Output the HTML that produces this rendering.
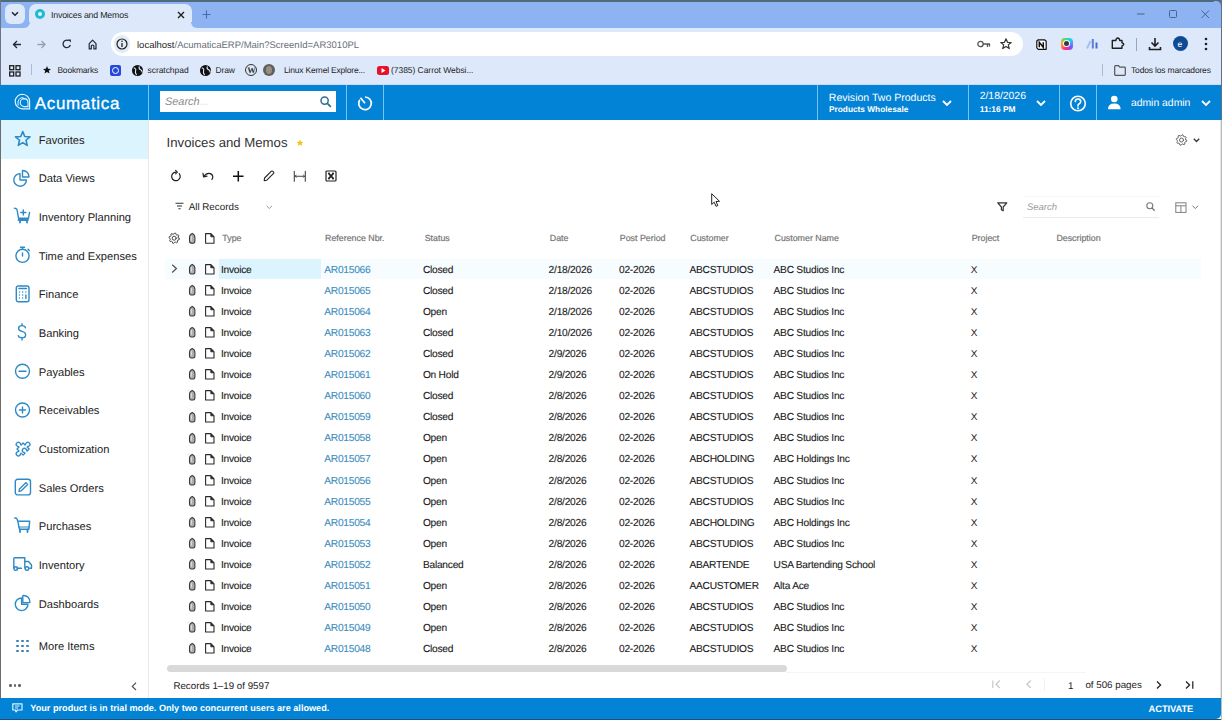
<!DOCTYPE html>
<html><head><meta charset="utf-8">
<style>
*{box-sizing:border-box;margin:0;padding:0}
html,body{width:1222px;height:720px;overflow:hidden;background:#fff;font-family:"Liberation Sans",sans-serif;color:#222}
.a{position:absolute;white-space:nowrap;text-rendering:geometricPrecision}
svg{position:absolute;overflow:visible}
</style></head><body>
<div style="position:absolute;left:0px;top:0px;width:1222px;height:28px;background:#8db3f2;"></div>
<div style="position:absolute;left:0px;top:0px;width:1222px;height:2px;background:#4f6b7c;"></div>
<div style="position:absolute;left:5px;top:4px;width:20px;height:20px;background:#dde9fb;border-radius:6px"></div>
<svg style="left:11px;top:11px;" width="8" height="6" viewBox="0 0 8 6"><path d="M1 1.2 L4 4.2 L7 1.2" fill="none" stroke="#222" stroke-width="1.5"/></svg>
<div style="position:absolute;left:29px;top:4px;width:163px;height:24px;background:#dde9fb;border-radius:7px 7px 0 0"></div>
<div style="position:absolute;left:24px;top:22px;width:6px;height:6px;background:#dde9fb;"></div>
<div style="position:absolute;left:24px;top:22px;width:6px;height:6px;background:#8db3f2;border-radius:0 0 6px 0"></div>
<div style="position:absolute;left:191px;top:22px;width:6px;height:6px;background:#dde9fb;"></div>
<div style="position:absolute;left:191px;top:22px;width:6px;height:6px;background:#8db3f2;border-radius:0 0 0 6px"></div>
<div style="position:absolute;left:35px;top:9px;width:10px;height:10px;background:#22b9d3;border-radius:50%"></div>
<div style="position:absolute;left:37.6px;top:11.6px;width:4.8px;height:4.8px;background:#dcfbff;border-radius:50%"></div>
<div class="a" style="left:51px;top:11.45px;font-size:8.8px;line-height:8.8px;color:#1f1f1f;font-weight:normal;font-style:normal;letter-spacing:-0.2px">Invoices and Memos</div>
<svg style="left:177px;top:11px;" width="8" height="8" viewBox="0 0 8 8"><path d="M1 1 L7 7 M7 1 L1 7" stroke="#1f1f1f" stroke-width="1.4"/></svg>
<svg style="left:202px;top:10px;" width="9" height="9" viewBox="0 0 9 9"><path d="M4.5 0.5 V8.5 M0.5 4.5 H8.5" stroke="#4a6aa8" stroke-width="1.1"/></svg>
<svg style="left:1137px;top:13px;" width="8" height="2" viewBox="0 0 8 2"><path d="M0 1 H7.5" stroke="#4a6290" stroke-width="1"/></svg>
<svg style="left:1169px;top:10px;" width="8" height="8" viewBox="0 0 8 8"><rect x="0.5" y="0.5" width="7" height="7" rx="1" fill="none" stroke="#4a6290" stroke-width="1"/></svg>
<svg style="left:1201px;top:10px;" width="9" height="9" viewBox="0 0 9 9"><path d="M0.5 0.5 L8 8 M8 0.5 L0.5 8" stroke="#4a6290" stroke-width="1"/></svg>
<div style="position:absolute;left:1216px;top:1px;width:6px;height:6px;background:#8db3f2;"></div>
<div style="position:absolute;left:1216px;top:1px;width:6px;height:6px;background:#5f7088;border-radius:0 0 0 0"></div>
<div style="position:absolute;left:1214px;top:1px;width:7px;height:7px;background:#8db3f2;border-radius:0 5px 0 0"></div>
<div style="position:absolute;left:0px;top:28px;width:1222px;height:32px;background:#dde9fb;"></div>
<svg style="left:11.5px;top:39.5px;" width="10" height="10" viewBox="0 0 10 10"><path d="M9 4.5 H1.5 M5 1 L1.5 4.5 L5 8" fill="none" stroke="#1f2a3a" stroke-width="1.4" stroke-linejoin="round"/></svg>
<svg style="left:36.5px;top:39.5px;" width="10" height="10" viewBox="0 0 10 10"><path d="M0.5 4.5 H8 M4.5 1 L8 4.5 L4.5 8" fill="none" stroke="#94a0b4" stroke-width="1.3" stroke-linejoin="round"/></svg>
<svg style="left:62px;top:39px;" width="10" height="10" viewBox="0 0 10 10"><path d="M8.37 6.08 A3.75 3.75 0 1 1 6.7 1.6" fill="none" stroke="#1f2a3a" stroke-width="1.3"/><path d="M5.9 0.5 L8.9 0.5 L8.9 3.5 Z" fill="#1f2a3a"/></svg>
<svg style="left:87.5px;top:38.8px;" width="10" height="11" viewBox="0 0 10 11"><path d="M1.2 9.9 V4.6 L4.6 1.2 L8 4.6 V9.9 H5.9 V7 Q5.9 6 4.6 6 Q3.3 6 3.3 7 V9.9 Z" fill="none" stroke="#1f2a3a" stroke-width="1.2" stroke-linejoin="round"/></svg>
<div style="position:absolute;left:111px;top:32px;width:912px;height:24px;background:#fff;border-radius:12px"></div>
<div style="position:absolute;left:114px;top:35px;width:16px;height:18px;background:#e3ebf7;border-radius:9px"></div>
<svg style="left:116px;top:38px;" width="12" height="12" viewBox="0 0 12 12"><circle cx="6" cy="6" r="5" fill="none" stroke="#1f1f1f" stroke-width="1.2"/><path d="M6 5 V9" stroke="#1f1f1f" stroke-width="1.3"/><circle cx="6" cy="3.3" r="0.8" fill="#1f1f1f"/></svg>
<div class="a" style="left:137px;top:40.56px;font-size:9.5px;line-height:9.5px;color:#1f1f1f;font-weight:normal;font-style:normal;">localhost<span style="color:#6a6f78">/AcumaticaERP/Main?ScreenId=AR3010PL</span></div>
<svg style="left:977px;top:40px;" width="14" height="8" viewBox="0 0 14 8"><circle cx="3.5" cy="4" r="2.7" fill="none" stroke="#555" stroke-width="1.3"/><path d="M6 4 H13 M10.5 4 V7 M12.5 4 V6.5" stroke="#555" stroke-width="1.3"/></svg>
<svg style="left:1000px;top:38px;" width="12" height="12" viewBox="0 0 12 12"><path d="M6 0.8 L7.5 4.3 L11.2 4.5 L8.3 6.9 L9.3 10.6 L6 8.5 L2.7 10.6 L3.7 6.9 L0.8 4.5 L4.5 4.3 Z" fill="none" stroke="#333" stroke-width="1.2" stroke-linejoin="round"/></svg>
<svg style="left:1036px;top:38.5px;" width="11" height="11" viewBox="0 0 11 11"><path d="M2 0.8 H8.5 L10.2 2.3 V10.3 H2.3 L0.8 8.8 V2 Z" fill="#fff" stroke="#111" stroke-width="1.2" stroke-linejoin="round"/><path d="M3.3 8.3 V3.3 L7.3 8.3 V3.3" fill="none" stroke="#111" stroke-width="1.5"/></svg>
<div style="position:absolute;left:1060.5px;top:37.8px;width:12px;height:12px;background:conic-gradient(from 200deg,#ff2d7a,#ffb020,#42e06a,#20c8ff,#8a4dff,#ff2d7a);border-radius:4px"></div>
<div style="position:absolute;left:1062.8px;top:40.1px;width:7.4px;height:7.4px;background:#fff;border-radius:50%"></div>
<div style="position:absolute;left:1063.8px;top:41.1px;width:5.4px;height:5.4px;background:#333a45;border-radius:50%"></div>
<svg style="left:1086px;top:38px;" width="13" height="11" viewBox="0 0 13 11"><path d="M1 10.5 L4.5 3" stroke="#a9bdf0" stroke-width="2"/><path d="M6.8 10.5 V1" stroke="#5b7fd8" stroke-width="2"/><path d="M10.5 10.5 V4.5" stroke="#4a6cc8" stroke-width="2"/></svg>
<svg style="left:1111px;top:37px;" width="14" height="13" viewBox="0 0 14 13"><path d="M1.3 3.5 H4.8 Q5.3 1 6.8 1 Q8.3 1 8.8 3.5 H11 V5.8 Q12.8 6.3 12.8 7.3 Q12.8 8.3 11 8.8 V11.3 H1.3 Z" fill="none" stroke="#1f1f1f" stroke-width="1.4" stroke-linejoin="round"/></svg>
<div style="position:absolute;left:1136px;top:38px;width:1px;height:13px;background:#9aa6b8;"></div>
<svg style="left:1148px;top:37px;" width="14" height="14" viewBox="0 0 14 14"><path d="M7 1 V9 M3.5 5.5 L7 9 L10.5 5.5 M1.5 10 V12.5 H12.5 V10" fill="none" stroke="#1f1f1f" stroke-width="1.6"/></svg>
<div style="position:absolute;left:1173px;top:36px;width:15px;height:15px;background:#0e4b94;border-radius:50%"></div>
<div class="a" style="left:1177.5px;top:39.80px;font-size:8.5px;line-height:8.5px;color:#fff;font-weight:normal;font-style:normal;">e</div>
<svg style="left:1204px;top:37px;" width="4" height="14" viewBox="0 0 4 14"><circle cx="2" cy="2" r="1.3" fill="#1f1f1f"/><circle cx="2" cy="7" r="1.3" fill="#1f1f1f"/><circle cx="2" cy="12" r="1.3" fill="#1f1f1f"/></svg>
<div style="position:absolute;left:0px;top:60px;width:1222px;height:25px;background:#dde9fb;"></div>
<svg style="left:9px;top:65px;" width="12" height="12" viewBox="0 0 12 12"><rect x="0.7" y="0.7" width="4" height="4" fill="none" stroke="#1f1f1f" stroke-width="1.3"/><rect x="0.7" y="7" width="4" height="4" fill="none" stroke="#1f1f1f" stroke-width="1.3"/><rect x="7" y="0.7" width="4" height="4" fill="none" stroke="#1f1f1f" stroke-width="1.3"/><rect x="7" y="7" width="4" height="4" fill="none" stroke="#1f1f1f" stroke-width="1.3"/></svg>
<div style="position:absolute;left:31px;top:64px;width:1px;height:11px;background:#a9b9d6;"></div>
<svg style="left:43px;top:66px;" width="8" height="8" viewBox="0 0 8 8"><path d="M4 0 L5.1 2.7 L8 2.9 L5.8 4.7 L6.5 7.6 L4 6 L1.5 7.6 L2.2 4.7 L0 2.9 L2.9 2.7 Z" fill="#111"/></svg>
<div class="a" style="left:57.4px;top:66.10px;font-size:8.5px;line-height:8.5px;color:#1f1f1f;font-weight:normal;font-style:normal;letter-spacing:-0.2px">Bookmarks</div>
<div style="position:absolute;left:110px;top:65px;width:11px;height:11px;background:#2447dc;border-radius:2px"></div>
<div style="position:absolute;left:112px;top:67px;width:7px;height:7px;background:transparent;border-radius:50%;border:1.2px solid #fff"></div>
<div style="position:absolute;left:132px;top:65px;width:11px;height:11px;background:#111;border-radius:50%"></div>
<svg style="left:132px;top:65px;" width="11" height="11" viewBox="0 0 11 11"><path d="M1.8 2.8 Q4.5 3.8 3.6 5.6 Q2.8 7.4 4.6 10 M7.4 1.4 Q6.5 3.7 8.3 4.6 Q10.2 5.5 10.2 7.4" fill="none" stroke="#dde9fb" stroke-width="1.1"/></svg>
<div class="a" style="left:147.5px;top:66.10px;font-size:8.5px;line-height:8.5px;color:#1f1f1f;font-weight:normal;font-style:normal;letter-spacing:-0.05px">scratchpad</div>
<div style="position:absolute;left:200px;top:65px;width:11px;height:11px;background:#111;border-radius:50%"></div>
<svg style="left:200px;top:65px;" width="11" height="11" viewBox="0 0 11 11"><path d="M1.8 2.8 Q4.5 3.8 3.6 5.6 Q2.8 7.4 4.6 10 M7.4 1.4 Q6.5 3.7 8.3 4.6 Q10.2 5.5 10.2 7.4" fill="none" stroke="#dde9fb" stroke-width="1.1"/></svg>
<div class="a" style="left:215.5px;top:66.10px;font-size:8.5px;line-height:8.5px;color:#1f1f1f;font-weight:normal;font-style:normal;letter-spacing:-0.15px">Draw</div>
<div style="position:absolute;left:245px;top:64px;width:12px;height:12px;background:transparent;border-radius:50%;border:1.4px solid #333"></div>
<div class="a" style="left:247.2px;top:66.02px;font-size:8.6px;line-height:8.6px;color:#333;font-weight:bold;font-style:normal;font-family:'Liberation Serif',serif">W</div>
<div style="position:absolute;left:263px;top:64px;width:12px;height:12px;background:#5d605c;border-radius:50%"></div>
<div style="position:absolute;left:266px;top:66px;width:6px;height:8px;background:#9a8e82;border-radius:50%"></div>
<div class="a" style="left:284px;top:66.10px;font-size:8.5px;line-height:8.5px;color:#1f1f1f;font-weight:normal;font-style:normal;letter-spacing:-0.2px">Linux Kernel Explore...</div>
<div style="position:absolute;left:377px;top:66px;width:12px;height:9px;background:#e8102a;border-radius:2.5px"></div>
<svg style="left:381px;top:68px;" width="5" height="5" viewBox="0 0 5 5"><path d="M0.5 0 L4.5 2.5 L0.5 5 Z" fill="#fff"/></svg>
<div class="a" style="left:391px;top:66.10px;font-size:8.5px;line-height:8.5px;color:#1f1f1f;font-weight:normal;font-style:normal;letter-spacing:-0.05px">(7385) Carrot Websi...</div>
<div style="position:absolute;left:1102px;top:64px;width:1px;height:12px;background:#a9b9d6;"></div>
<svg style="left:1114px;top:65px;" width="12" height="11" viewBox="0 0 12 11"><path d="M0.7 1.5 Q0.7 0.7 1.5 0.7 H4.5 L5.8 2.2 H10.5 Q11.3 2.2 11.3 3 V9.5 Q11.3 10.3 10.5 10.3 H1.5 Q0.7 10.3 0.7 9.5 Z" fill="none" stroke="#555" stroke-width="1.2"/></svg>
<div class="a" style="left:1131px;top:66.10px;font-size:8.5px;line-height:8.5px;color:#1f1f1f;font-weight:normal;font-style:normal;letter-spacing:-0.17px">Todos los marcadores</div>
<div style="position:absolute;left:0px;top:84px;width:1222px;height:1px;background:#c8dcf5;"></div>
<div style="position:absolute;left:0px;top:0px;width:1px;height:85px;background:#6d7580;"></div>
<div style="position:absolute;left:0px;top:85px;width:1222px;height:35px;background:#0383d6;"></div>
<svg style="left:14px;top:93px;" width="18" height="18" viewBox="0 0 18 18"><path d="M8.5 1.2 A7.3 7.3 0 1 0 8.5 15.8 H15.6 V8.5 A7.3 7.3 0 0 0 8.5 1.2 Z" fill="none" stroke="#e6f7ff" stroke-width="1.15"/><path d="M10.2 5.6 A4 4 0 1 0 10.2 13.6 H14 V9.6 A4 4 0 0 0 10.2 5.6 Z" fill="none" stroke="#e6f7ff" stroke-width="1.1"/><path d="M4.2 12.5 Q3.2 7.5 6.3 5.2 Q8.6 3.8 10.6 5.6" fill="none" stroke="#e6f7ff" stroke-width="1"/></svg>
<div class="a" style="left:34.8px;top:94.61px;font-size:17px;line-height:17px;color:#fff;font-weight:normal;font-style:normal;letter-spacing:0.65px;-webkit-text-stroke:0.3px #fff">Acumatica</div>
<div style="position:absolute;left:148px;top:85px;width:1px;height:35px;background:#72c4f6;"></div>
<div style="position:absolute;left:160px;top:91px;width:176px;height:21px;background:#fff;"></div>
<div class="a" style="left:165px;top:96.97px;font-size:10.9px;line-height:10.9px;color:#8a8a8a;font-weight:normal;font-style:italic;">Search<span style="color:#dcdcdc">...</span></div>
<svg style="left:320px;top:96px;" width="12" height="12" viewBox="0 0 12 12"><circle cx="4.6" cy="4.6" r="3.6" fill="none" stroke="#2f6c96" stroke-width="1.5"/><path d="M7.3 7.3 L10.8 10.8" stroke="#2f6c96" stroke-width="1.8"/></svg>
<div style="position:absolute;left:346px;top:85px;width:1px;height:35px;background:#72c4f6;"></div>
<svg style="left:357px;top:95px;" width="16" height="16" viewBox="0 0 16 16"><path d="M8 2 A6.3 6.3 0 1 1 2.8 4.7" fill="none" stroke="#fff" stroke-width="1.7"/><path d="M3.5 2.8 L8 8.2" stroke="#fff" stroke-width="1.7"/></svg>
<div style="position:absolute;left:383px;top:85px;width:1px;height:35px;background:#72c4f6;"></div>
<div style="position:absolute;left:817px;top:85px;width:1px;height:35px;background:#72c4f6;"></div>
<div class="a" style="left:828.8px;top:93.08px;font-size:10.54px;line-height:10.54px;color:#fff;font-weight:normal;font-style:normal;">Revision Two Products</div>
<div class="a" style="left:829px;top:104.77px;font-size:8.3px;line-height:8.3px;color:#fff;font-weight:bold;font-style:normal;">Products Wholesale</div>
<svg style="left:942px;top:100px;" width="10" height="7" viewBox="0 0 10 7"><path d="M1 1 L5 5 L9 1" fill="none" stroke="#fff" stroke-width="1.8"/></svg>
<div style="position:absolute;left:968px;top:85px;width:1px;height:35px;background:#72c4f6;"></div>
<div class="a" style="left:979.7px;top:92.40px;font-size:10.4px;line-height:10.4px;color:#fff;font-weight:normal;font-style:normal;">2/18/2026</div>
<div class="a" style="left:979.7px;top:104.79px;font-size:8.4px;line-height:8.4px;color:#fff;font-weight:bold;font-style:normal;">11:16 PM</div>
<svg style="left:1036px;top:100px;" width="10" height="7" viewBox="0 0 10 7"><path d="M1 1 L5 5 L9 1" fill="none" stroke="#fff" stroke-width="1.8"/></svg>
<div style="position:absolute;left:1059px;top:85px;width:1px;height:35px;background:#72c4f6;"></div>
<svg style="left:1069px;top:95px;" width="18" height="18" viewBox="0 0 18 18"><circle cx="9" cy="8.5" r="7.3" fill="none" stroke="#fff" stroke-width="1.6"/></svg>
<svg style="left:1069px;top:95px;" width="18" height="18" viewBox="0 0 18 18"><path d="M6.3 6.6 Q6.3 4 9 4 Q11.7 4 11.7 6.5 Q11.7 8 10.2 8.8 Q9 9.4 9 10.6 V11" fill="none" stroke="#fff" stroke-width="1.6" stroke-linecap="round"/><circle cx="9" cy="13.2" r="1" fill="#fff"/></svg>
<div style="position:absolute;left:1096px;top:85px;width:1px;height:35px;background:#72c4f6;"></div>
<svg style="left:1107px;top:95px;" width="15" height="15" viewBox="0 0 15 15"><circle cx="7.3" cy="4" r="3.3" fill="#fff"/><path d="M1 14.3 Q1 8.6 7.3 8.6 Q13.6 8.6 13.6 14.3 Z" fill="#fff"/></svg>
<div class="a" style="left:1130.9px;top:98.50px;font-size:10.4px;line-height:10.4px;color:#fff;font-weight:normal;font-style:normal;">admin admin</div>
<svg style="left:1201px;top:100px;" width="10" height="7" viewBox="0 0 10 7"><path d="M1 1 L5 5 L9 1" fill="none" stroke="#fff" stroke-width="1.8"/></svg>
<div style="position:absolute;left:0px;top:120px;width:149px;height:578px;background:#fff;"></div>
<div style="position:absolute;left:148px;top:120px;width:1px;height:578px;background:#e8e8e8;"></div>
<div style="position:absolute;left:1px;top:120px;width:147px;height:38.5px;background:#dcf4fd;"></div>
<div style="position:absolute;left:0px;top:120px;width:1px;height:578px;background:#6d6d6d;"></div>
<div class="a" style="left:38.75px;top:135.56px;font-size:11.15px;line-height:11.15px;color:#222;font-weight:normal;font-style:normal;">Favorites</div>
<div class="a" style="left:38.75px;top:174.24px;font-size:11.15px;line-height:11.15px;color:#222;font-weight:normal;font-style:normal;">Data Views</div>
<div class="a" style="left:38.75px;top:212.92px;font-size:11.15px;line-height:11.15px;color:#222;font-weight:normal;font-style:normal;">Inventory Planning</div>
<div class="a" style="left:38.75px;top:251.60px;font-size:11.15px;line-height:11.15px;color:#222;font-weight:normal;font-style:normal;">Time and Expenses</div>
<div class="a" style="left:38.75px;top:290.28px;font-size:11.15px;line-height:11.15px;color:#222;font-weight:normal;font-style:normal;">Finance</div>
<div class="a" style="left:38.75px;top:328.96px;font-size:11.15px;line-height:11.15px;color:#222;font-weight:normal;font-style:normal;">Banking</div>
<div class="a" style="left:38.75px;top:367.64px;font-size:11.15px;line-height:11.15px;color:#222;font-weight:normal;font-style:normal;">Payables</div>
<div class="a" style="left:38.75px;top:406.32px;font-size:11.15px;line-height:11.15px;color:#222;font-weight:normal;font-style:normal;">Receivables</div>
<div class="a" style="left:38.75px;top:445.00px;font-size:11.15px;line-height:11.15px;color:#222;font-weight:normal;font-style:normal;">Customization</div>
<div class="a" style="left:38.75px;top:483.68px;font-size:11.15px;line-height:11.15px;color:#222;font-weight:normal;font-style:normal;">Sales Orders</div>
<div class="a" style="left:38.75px;top:522.36px;font-size:11.15px;line-height:11.15px;color:#222;font-weight:normal;font-style:normal;">Purchases</div>
<div class="a" style="left:38.75px;top:561.04px;font-size:11.15px;line-height:11.15px;color:#222;font-weight:normal;font-style:normal;">Inventory</div>
<div class="a" style="left:38.75px;top:599.72px;font-size:11.15px;line-height:11.15px;color:#222;font-weight:normal;font-style:normal;">Dashboards</div>
<div class="a" style="left:38.75px;top:642.36px;font-size:11.15px;line-height:11.15px;color:#222;font-weight:normal;font-style:normal;">More Items</div>
<svg style="left:15px;top:131px;" width="16" height="16" viewBox="0 0 16 16"><polygon points="7.75,0.60 9.75,5.45 14.98,5.85 10.98,9.25 12.22,14.35 7.75,11.60 3.28,14.35 4.52,9.25 0.52,5.85 5.75,5.45" fill="none" stroke="#2d8ac6" stroke-width="1.6" stroke-linejoin="round" stroke-linecap="round"/></svg>
<svg style="left:13px;top:169px;" width="18" height="18" viewBox="0 0 18 18"><path d="M7 4.6 A6.3 6.3 0 1 0 13.4 11 H7 Z" fill="none" stroke="#2d8ac6" stroke-width="1.4" stroke-linejoin="round" stroke-linecap="round"/><path d="M9.5 1.5 A6.3 6.3 0 0 1 16 8 H9.5 Z" fill="none" stroke="#2d8ac6" stroke-width="1.4" stroke-linejoin="round" stroke-linecap="round"/></svg>
<svg style="left:13px;top:207px;" width="18" height="18" viewBox="0 0 18 18"><path d="M1.5 1.2 Q3.5 1.2 4 2.5 L5.5 11.2 H15.5 L16.5 5.5" fill="none" stroke="#2d8ac6" stroke-width="1.4" stroke-linejoin="round" stroke-linecap="round"/><path d="M7 15.5 V12 M14 15.5 V12 M5.5 13 H15" fill="none" stroke="#2d8ac6" stroke-width="1.8" stroke-linejoin="round" stroke-linecap="round"/><path d="M10.3 3 V8 M7.8 5.5 H12.8" fill="none" stroke="#2d8ac6" stroke-width="1.4" stroke-linejoin="round" stroke-linecap="round"/></svg>
<svg style="left:14px;top:246px;" width="18" height="18" viewBox="0 0 18 18"><circle cx="8.5" cy="9.8" r="6.6" fill="none" stroke="#2d8ac6" stroke-width="1.4" stroke-linejoin="round" stroke-linecap="round"/><path d="M6.5 1.2 H10.5 M8.5 1.2 V3.2 M14 3.2 L15.3 4.6 M8.5 7 V10" fill="none" stroke="#2d8ac6" stroke-width="1.4" stroke-linejoin="round" stroke-linecap="round"/></svg>
<svg style="left:15px;top:285px;" width="16" height="18" viewBox="0 0 16 18"><rect x="1.3" y="1" width="12.7" height="15.8" rx="2" fill="none" stroke="#2d8ac6" stroke-width="1.4" stroke-linejoin="round" stroke-linecap="round"/><path d="M4 3.6 H11.5" fill="none" stroke="#2d8ac6" stroke-width="1.5" stroke-linejoin="round" stroke-linecap="round"/><path d="M4.5 7 v0 M7.7 7 v0 M10.9 7 v0 M4.5 10 v0 M7.7 10 v0 M10.9 10 v0 M4.5 13 v0 M7.7 13 v0 M10.9 10 V13.5" fill="none" stroke="#2d8ac6" stroke-width="1.4" stroke-linejoin="round" stroke-linecap="round"/></svg>
<svg style="left:16px;top:323px;" width="12" height="18" viewBox="0 0 12 18"><path d="M9.5 4.8 Q9 2.6 6 2.6 Q2.6 2.6 2.6 5.2 Q2.6 7.6 6 8.4 Q9.6 9.3 9.6 12 Q9.6 14.8 6 14.8 Q2.8 14.8 2.3 12.6 M6 0.8 V2.6 M6 14.8 V17" fill="none" stroke="#2d8ac6" stroke-width="1.4" stroke-linejoin="round" stroke-linecap="round"/></svg>
<svg style="left:14px;top:363px;" width="18" height="18" viewBox="0 0 18 18"><circle cx="8.5" cy="8.25" r="7" fill="none" stroke="#2d8ac6" stroke-width="1.4" stroke-linejoin="round" stroke-linecap="round"/><path d="M5 8.25 H12" fill="none" stroke="#2d8ac6" stroke-width="1.4" stroke-linejoin="round" stroke-linecap="round"/></svg>
<svg style="left:14px;top:402px;" width="18" height="18" viewBox="0 0 18 18"><circle cx="8.5" cy="8" r="7" fill="none" stroke="#2d8ac6" stroke-width="1.4" stroke-linejoin="round" stroke-linecap="round"/><path d="M5.5 8 H11.5 M8.5 5 V11" fill="none" stroke="#2d8ac6" stroke-width="1.4" stroke-linejoin="round" stroke-linecap="round"/></svg>
<svg style="left:12.5px;top:438.5px;" width="22" height="22" viewBox="0 0 22 22"><g transform="scale(0.86) rotate(-45 11 11)"><path d="M6 7 H9.3 C9.3 5.5 8.5 5.2 8.5 4.3 A2.5 2.5 0 0 1 13.5 4.3 C13.5 5.2 12.7 5.5 12.7 7 H16 V10.3 C17.5 10.3 17.8 9.5 18.7 9.5 A2.5 2.5 0 0 1 18.7 14.5 C17.8 14.5 17.5 13.7 16 13.7 V17 H12.7 C12.7 15.5 13.5 15.2 13.5 14.3 A2.5 2.5 0 0 0 8.5 14.3 C8.5 15.2 9.3 15.5 9.3 17 H6 V13.7 C4.5 13.7 4.2 14.5 3.3 14.5 A2.5 2.5 0 0 1 3.3 9.5 C4.2 9.5 4.5 10.3 6 10.3 Z" fill="none" stroke="#2d8ac6" stroke-width="1.5" stroke-linejoin="round" stroke-linecap="round"/></g></svg>
<svg style="left:14px;top:478px;" width="18" height="18" viewBox="0 0 18 18"><rect x="1.3" y="1.3" width="15.2" height="15.6" rx="2.4" fill="none" stroke="#2d8ac6" stroke-width="1.4" stroke-linejoin="round" stroke-linecap="round"/><path d="M5 13.5 L5.5 11 L11.8 4.7 L13.6 6.5 L7.3 12.8 Z" fill="none" stroke="#2d8ac6" stroke-width="1.3" stroke-linejoin="round" stroke-linecap="round"/></svg>
<svg style="left:13px;top:516px;" width="18" height="18" viewBox="0 0 18 18"><path d="M1.8 2 Q3.3 1.8 4 3 L4.8 5.3 H16.7 L15.8 13.3 H6.5 L4.8 5.3" fill="none" stroke="#2d8ac6" stroke-width="1.4" stroke-linejoin="round" stroke-linecap="round"/><path d="M7 13.3 V16 M14.5 13.3 V16" fill="none" stroke="#2d8ac6" stroke-width="1.8" stroke-linejoin="round" stroke-linecap="round"/><path d="M5.8 11 H15.8" fill="none" stroke="#2d8ac6" stroke-width="1.2" stroke-linejoin="round" stroke-linecap="round"/></svg>
<svg style="left:12px;top:556px;" width="21" height="16" viewBox="0 0 21 16"><path d="M1.8 12 V2.8 Q1.8 1.8 2.8 1.8 H12.8 V12" fill="none" stroke="#2d8ac6" stroke-width="1.4" stroke-linejoin="round" stroke-linecap="round"/><path d="M12.8 5.5 H16.5 L19.5 9 V12.3 H17.8 M9.5 12.3 H5" fill="none" stroke="#2d8ac6" stroke-width="1.4" stroke-linejoin="round" stroke-linecap="round"/><circle cx="3.8" cy="12.6" r="1.8" fill="none" stroke="#2d8ac6" stroke-width="1.4" stroke-linejoin="round" stroke-linecap="round"/><circle cx="15" cy="12.6" r="1.8" fill="none" stroke="#2d8ac6" stroke-width="1.4" stroke-linejoin="round" stroke-linecap="round"/></svg>
<svg style="left:13px;top:593px;" width="18" height="18" viewBox="0 0 18 18"><path d="M8.6 5 A6.3 6.3 0 1 0 14.9 11.3 H8.6 Z" fill="none" stroke="#2d8ac6" stroke-width="1.4" stroke-linejoin="round" stroke-linecap="round"/><path d="M9.8 2.6 A6.3 6.3 0 0 1 16.9 9.6 H9.8 Z" fill="none" stroke="#2d8ac6" stroke-width="1.4" stroke-linejoin="round" stroke-linecap="round"/></svg>
<div style="position:absolute;left:16.3px;top:639.6px;width:2.8px;height:2.8px;background:#3b7eb4;border-radius:1px"></div>
<div style="position:absolute;left:21.200000000000003px;top:639.6px;width:2.8px;height:2.8px;background:#3b7eb4;border-radius:1px"></div>
<div style="position:absolute;left:26.0px;top:639.6px;width:2.8px;height:2.8px;background:#3b7eb4;border-radius:1px"></div>
<div style="position:absolute;left:16.3px;top:644.6px;width:2.8px;height:2.8px;background:#3b7eb4;border-radius:1px"></div>
<div style="position:absolute;left:21.200000000000003px;top:644.6px;width:2.8px;height:2.8px;background:#3b7eb4;border-radius:1px"></div>
<div style="position:absolute;left:26.0px;top:644.6px;width:2.8px;height:2.8px;background:#3b7eb4;border-radius:1px"></div>
<div style="position:absolute;left:16.3px;top:649.6px;width:2.8px;height:2.8px;background:#3b7eb4;border-radius:1px"></div>
<div style="position:absolute;left:21.200000000000003px;top:649.6px;width:2.8px;height:2.8px;background:#3b7eb4;border-radius:1px"></div>
<div style="position:absolute;left:26.0px;top:649.6px;width:2.8px;height:2.8px;background:#3b7eb4;border-radius:1px"></div>
<div style="position:absolute;left:9.0px;top:684.3px;width:2.5px;height:2.5px;background:#666;border-radius:50%"></div>
<div style="position:absolute;left:13.5px;top:684.3px;width:2.5px;height:2.5px;background:#666;border-radius:50%"></div>
<div style="position:absolute;left:18.0px;top:684.3px;width:2.5px;height:2.5px;background:#666;border-radius:50%"></div>
<svg style="left:131px;top:682px;" width="6" height="9" viewBox="0 0 6 9"><path d="M5 0.8 L1.3 4.4 L5 8" fill="none" stroke="#555" stroke-width="1.2"/></svg>
<div class="a" style="left:166.6px;top:136.03px;font-size:13.2px;line-height:13.2px;color:#333;font-weight:normal;font-style:normal;">Invoices and Memos</div>
<svg style="left:296.2px;top:139.2px;" width="8" height="8" viewBox="0 0 8 8"><polygon points="4.00,0.40 4.94,2.71 7.42,2.89 5.52,4.49 6.12,6.91 4.00,5.60 1.88,6.91 2.48,4.49 0.58,2.89 3.06,2.71" fill="#f2c21b"/></svg>
<svg style="left:1175px;top:134px;" width="13" height="13" viewBox="0 0 13 13"><polygon points="11.77,6.52 11.57,7.54 10.15,7.95 9.70,8.62 9.86,10.10 9.00,10.67 7.70,9.96 6.91,10.11 5.98,11.27 4.96,11.07 4.55,9.65 3.88,9.20 2.40,9.36 1.83,8.50 2.54,7.20 2.39,6.41 1.23,5.48 1.43,4.46 2.85,4.05 3.30,3.38 3.14,1.90 4.00,1.33 5.30,2.04 6.09,1.89 7.02,0.73 8.04,0.93 8.45,2.35 9.12,2.80 10.60,2.64 11.17,3.50 10.46,4.80 10.61,5.59" fill="none" stroke="#666" stroke-width="fill="none" stroke="#2d8ac6" stroke-width="1.4" stroke-linejoin="round" stroke-linecap="round"" stroke-linejoin="round"/><circle cx="6.5" cy="6" r="2.0" fill="none" stroke="#666" stroke-width="fill="none" stroke="#2d8ac6" stroke-width="1.4" stroke-linejoin="round" stroke-linecap="round""/></svg>
<svg style="left:1192.5px;top:138px;" width="7" height="5" viewBox="0 0 7 5"><path d="M0.8 0.8 L3.5 3.5 L6.2 0.8" fill="none" stroke="#333" stroke-width="1.3"/></svg>
<svg style="left:170px;top:170px;" width="13" height="13" viewBox="0 0 13 13"><path d="M9.2 3.6 A4.3 4.3 0 1 1 5.8 2.1" fill="none" stroke="#222" stroke-width="1.2" stroke-linecap="round" stroke-linejoin="round"/><path d="M5.6 0.4 L7.4 2.1 L5.6 3.8" fill="none" stroke="#222" stroke-width="1.1" stroke-linecap="round" stroke-linejoin="round"/></svg>
<svg style="left:201px;top:170px;" width="14" height="13" viewBox="0 0 14 13"><path d="M2.8 6.4 Q5.2 3 8.4 3.3 Q11.6 3.7 11.8 6.8 Q11.8 8.4 10.9 9.4" fill="none" stroke="#222" stroke-width="1.2" stroke-linecap="round" stroke-linejoin="round"/><path d="M2 3.4 L2.6 6.9 L6 6.2" fill="none" stroke="#222" stroke-width="1.2" stroke-linecap="round" stroke-linejoin="round"/></svg>
<svg style="left:232px;top:170px;" width="13" height="13" viewBox="0 0 13 13"><path d="M6.3 1 V11.5 M1 6.2 H11.5" stroke="#111" stroke-width="1.5"/></svg>
<svg style="left:263px;top:170px;" width="12" height="12" viewBox="0 0 12 12"><path d="M1.2 10.6 L1.6 8 L8.4 1.2 Q9 0.7 9.6 1.2 L10.6 2.2 Q11.1 2.8 10.6 3.4 L3.8 10.2 Z" fill="none" stroke="#222" stroke-width="1.1" stroke-linecap="round" stroke-linejoin="round"/></svg>
<svg style="left:293px;top:170px;" width="14" height="13" viewBox="0 0 14 13"><path d="M1.3 1.2 V11.2 M12.3 1.2 V11.2 M1.8 6.2 H11.8" fill="none" stroke="#444" stroke-width="1.1" stroke-linecap="round" stroke-linejoin="round"/><path d="M3.2 5 L2 6.2 L3.2 7.4 M10.4 5 L11.6 6.2 L10.4 7.4" fill="none" stroke="#444" stroke-width="0.9" stroke-linecap="round" stroke-linejoin="round"/></svg>
<svg style="left:325px;top:170px;" width="12" height="12" viewBox="0 0 12 12"><rect x="1" y="1" width="10" height="10" rx="1" fill="none" stroke="#222" stroke-width="1.2"/><path d="M3.4 3.2 L8.6 8.8 M8.6 3.2 L3.4 8.8" stroke="#222" stroke-width="1.7"/><path d="M3 3.2 H5 M7 3.2 H9 M3 8.8 H5 M7 8.8 H9" stroke="#222" stroke-width="0.8"/></svg>
<svg style="left:175px;top:202px;" width="9" height="9" viewBox="0 0 9 9"><path d="M0.5 1.2 H8.5 M2 4 H7 M3.4 6.8 H5.6" stroke="#333" stroke-width="1.1"/></svg>
<div class="a" style="left:188.7px;top:202.90px;font-size:9.8px;line-height:9.8px;color:#222;font-weight:normal;font-style:normal;">All Records</div>
<svg style="left:265.5px;top:205px;" width="7" height="5" viewBox="0 0 7 5"><path d="M0.5 0.8 L3.3 3.5 L6.1 0.8" fill="none" stroke="#999" stroke-width="1"/></svg>
<svg style="left:997px;top:202px;" width="11" height="10" viewBox="0 0 11 10"><path d="M0.8 0.8 H9.8 L6.2 5 V8.8 L4.4 7.8 V5 Z" fill="none" stroke="#333" stroke-width="1.2" stroke-linejoin="round"/></svg>
<div style="position:absolute;left:1023px;top:216.5px;width:136px;height:1px;background:#ebebeb;"></div>
<div style="position:absolute;left:1023px;top:196px;width:136px;height:1px;background:#f7f7f7;"></div>
<div class="a" style="left:1026.9px;top:202.76px;font-size:9.5px;line-height:9.5px;color:#9a9a9a;font-weight:normal;font-style:italic;">Search</div>
<svg style="left:1146px;top:202px;" width="10" height="10" viewBox="0 0 10 10"><circle cx="3.8" cy="3.8" r="3" fill="none" stroke="#777" stroke-width="1.1"/><path d="M6 6 L8.7 8.7" stroke="#777" stroke-width="1.3"/></svg>
<svg style="left:1174.5px;top:201.5px;" width="12" height="11" viewBox="0 0 12 11"><rect x="0.8" y="0.8" width="10.2" height="9.6" fill="none" stroke="#808080" stroke-width="1"/><path d="M0.8 3.8 H11 M5.9 3.8 V10.4" stroke="#808080" stroke-width="1"/></svg>
<svg style="left:1191.5px;top:204.5px;" width="7" height="5" viewBox="0 0 7 5"><path d="M0.5 0.8 L3.3 3.5 L6.1 0.8" fill="none" stroke="#777" stroke-width="1"/></svg>
<svg style="left:168px;top:232px;" width="12" height="12" viewBox="0 0 12 12"><polygon points="11.37,6.71 11.18,7.71 9.78,8.11 9.34,8.77 9.50,10.22 8.65,10.79 7.38,10.08 6.60,10.24 5.69,11.37 4.69,11.18 4.29,9.78 3.63,9.34 2.18,9.50 1.61,8.65 2.32,7.38 2.16,6.60 1.03,5.69 1.22,4.69 2.62,4.29 3.06,3.63 2.90,2.18 3.75,1.61 5.02,2.32 5.80,2.16 6.71,1.03 7.71,1.22 8.11,2.62 8.77,3.06 10.22,2.90 10.79,3.75 10.08,5.02 10.24,5.80" fill="none" stroke="#444" stroke-width="fill="none" stroke="#2d8ac6" stroke-width="1.4" stroke-linejoin="round" stroke-linecap="round"" stroke-linejoin="round"/><circle cx="6.2" cy="6.2" r="2.0" fill="none" stroke="#444" stroke-width="fill="none" stroke="#2d8ac6" stroke-width="1.4" stroke-linejoin="round" stroke-linecap="round""/></svg>
<svg style="left:188.6px;top:233px;" width="7" height="11" viewBox="0 0 7 11"><path d="M3.2 0.4 Q5.9 1.6 5.9 4.2 V8.2 Q5.9 10.3 3.2 10.3 Q0.5 10.3 0.5 8.2 V4.2 Q0.5 1.6 3.2 0.4 Z" fill="#a9acb2" stroke="#3a3a3a" stroke-width="1.05"/><path d="M2.3 3 V7.8" stroke="#e6e6e6" stroke-width="1"/></svg>
<svg style="left:204.8px;top:233px;" width="10" height="11" viewBox="0 0 10 11"><path d="M0.6 0.6 H5.8 L9 3.8 V10.2 H0.6 Z" fill="#fff" stroke="#2a2a2a" stroke-width="1.1" stroke-linejoin="round"/><path d="M5.8 0.6 V3.8 H9 Z" fill="#2a2a2a" stroke="#2a2a2a" stroke-width="0.8" stroke-linejoin="round"/></svg>
<div class="a" style="left:222.3px;top:233.91px;font-size:8.85px;line-height:8.85px;color:#767676;font-weight:normal;font-style:normal;-webkit-text-stroke:0.2px #767676">Type</div>
<div class="a" style="left:325px;top:233.91px;font-size:8.85px;line-height:8.85px;color:#767676;font-weight:normal;font-style:normal;-webkit-text-stroke:0.2px #767676">Reference Nbr.</div>
<div class="a" style="left:424.7px;top:233.91px;font-size:8.85px;line-height:8.85px;color:#767676;font-weight:normal;font-style:normal;-webkit-text-stroke:0.2px #767676">Status</div>
<div class="a" style="left:549.8px;top:233.91px;font-size:8.85px;line-height:8.85px;color:#767676;font-weight:normal;font-style:normal;-webkit-text-stroke:0.2px #767676">Date</div>
<div class="a" style="left:619.8px;top:233.91px;font-size:8.85px;line-height:8.85px;color:#767676;font-weight:normal;font-style:normal;-webkit-text-stroke:0.2px #767676">Post Period</div>
<div class="a" style="left:690.3px;top:233.91px;font-size:8.85px;line-height:8.85px;color:#767676;font-weight:normal;font-style:normal;-webkit-text-stroke:0.2px #767676">Customer</div>
<div class="a" style="left:774.5px;top:233.91px;font-size:8.85px;line-height:8.85px;color:#767676;font-weight:normal;font-style:normal;-webkit-text-stroke:0.2px #767676">Customer Name</div>
<div class="a" style="left:971.7px;top:233.91px;font-size:8.85px;line-height:8.85px;color:#767676;font-weight:normal;font-style:normal;-webkit-text-stroke:0.2px #767676">Project</div>
<div class="a" style="left:1056.4px;top:233.91px;font-size:8.85px;line-height:8.85px;color:#767676;font-weight:normal;font-style:normal;-webkit-text-stroke:0.2px #767676">Description</div>
<div style="position:absolute;left:165px;top:259px;width:1036px;height:20px;background:#f7fcfe;"></div>
<div style="position:absolute;left:218.5px;top:259.3px;width:102.3px;height:19.4px;background:#dbf4fd;"></div>
<svg style="left:171px;top:264px;" width="7" height="10" viewBox="0 0 7 10"><path d="M1.2 0.8 L5.4 4.6 L1.2 8.4" fill="none" stroke="#555" stroke-width="1.3"/></svg>
<svg style="left:188.6px;top:264.0px;" width="7" height="10.8" viewBox="0 0 7 10.8"><path d="M3.2 0.4 Q5.9 1.6 5.9 4.2 V8.0 Q5.9 10.100000000000001 3.2 10.100000000000001 Q0.5 10.100000000000001 0.5 8.0 V4.2 Q0.5 1.6 3.2 0.4 Z" fill="#a9acb2" stroke="#3a3a3a" stroke-width="1.05"/><path d="M2.3 3 V7.6000000000000005" stroke="#e6e6e6" stroke-width="1"/></svg>
<svg style="left:204.8px;top:264.0px;" width="10" height="10.8" viewBox="0 0 10 10.8"><path d="M0.6 0.6 H5.8 L9 3.8 V10.0 H0.6 Z" fill="#fff" stroke="#2a2a2a" stroke-width="1.1" stroke-linejoin="round"/><path d="M5.8 0.6 V3.8 H9 Z" fill="#2a2a2a" stroke="#2a2a2a" stroke-width="0.8" stroke-linejoin="round"/></svg>
<div class="a" style="left:220.9px;top:265.77px;font-size:10.2px;line-height:10.2px;color:#1a1a1a;font-weight:normal;font-style:normal;letter-spacing:-0.23px;-webkit-text-stroke:0.1px #1a1a1a">Invoice</div>
<div class="a" style="left:324.2px;top:265.77px;font-size:10.2px;line-height:10.2px;color:#3b8cc0;font-weight:normal;font-style:normal;letter-spacing:-0.23px;-webkit-text-stroke:0.1px #3b8cc0">AR015066</div>
<div class="a" style="left:422.9px;top:265.77px;font-size:10.2px;line-height:10.2px;color:#1a1a1a;font-weight:normal;font-style:normal;letter-spacing:-0.23px;-webkit-text-stroke:0.1px #1a1a1a">Closed</div>
<div class="a" style="left:548.6px;top:265.77px;font-size:10.2px;line-height:10.2px;color:#1a1a1a;font-weight:normal;font-style:normal;letter-spacing:-0.23px;-webkit-text-stroke:0.1px #1a1a1a">2/18/2026</div>
<div class="a" style="left:619px;top:265.77px;font-size:10.2px;line-height:10.2px;color:#1a1a1a;font-weight:normal;font-style:normal;letter-spacing:-0.23px;-webkit-text-stroke:0.1px #1a1a1a">02-2026</div>
<div class="a" style="left:689.4px;top:265.77px;font-size:10.2px;line-height:10.2px;color:#1a1a1a;font-weight:normal;font-style:normal;letter-spacing:-0.23px;-webkit-text-stroke:0.1px #1a1a1a">ABCSTUDIOS</div>
<div class="a" style="left:773.5px;top:265.77px;font-size:10.2px;line-height:10.2px;color:#1a1a1a;font-weight:normal;font-style:normal;letter-spacing:-0.23px;-webkit-text-stroke:0.1px #1a1a1a">ABC Studios Inc</div>
<div class="a" style="left:970.7px;top:265.74px;font-size:10px;line-height:10px;color:#222;font-weight:normal;font-style:normal;">X</div>
<svg style="left:188.6px;top:285.08px;" width="7" height="10.8" viewBox="0 0 7 10.8"><path d="M3.2 0.4 Q5.9 1.6 5.9 4.2 V8.0 Q5.9 10.100000000000001 3.2 10.100000000000001 Q0.5 10.100000000000001 0.5 8.0 V4.2 Q0.5 1.6 3.2 0.4 Z" fill="#a9acb2" stroke="#3a3a3a" stroke-width="1.05"/><path d="M2.3 3 V7.6000000000000005" stroke="#e6e6e6" stroke-width="1"/></svg>
<svg style="left:204.8px;top:285.08px;" width="10" height="10.8" viewBox="0 0 10 10.8"><path d="M0.6 0.6 H5.8 L9 3.8 V10.0 H0.6 Z" fill="#fff" stroke="#2a2a2a" stroke-width="1.1" stroke-linejoin="round"/><path d="M5.8 0.6 V3.8 H9 Z" fill="#2a2a2a" stroke="#2a2a2a" stroke-width="0.8" stroke-linejoin="round"/></svg>
<div class="a" style="left:220.9px;top:286.85px;font-size:10.2px;line-height:10.2px;color:#1a1a1a;font-weight:normal;font-style:normal;letter-spacing:-0.23px;-webkit-text-stroke:0.1px #1a1a1a">Invoice</div>
<div class="a" style="left:324.2px;top:286.85px;font-size:10.2px;line-height:10.2px;color:#3b8cc0;font-weight:normal;font-style:normal;letter-spacing:-0.23px;-webkit-text-stroke:0.1px #3b8cc0">AR015065</div>
<div class="a" style="left:422.9px;top:286.85px;font-size:10.2px;line-height:10.2px;color:#1a1a1a;font-weight:normal;font-style:normal;letter-spacing:-0.23px;-webkit-text-stroke:0.1px #1a1a1a">Closed</div>
<div class="a" style="left:548.6px;top:286.85px;font-size:10.2px;line-height:10.2px;color:#1a1a1a;font-weight:normal;font-style:normal;letter-spacing:-0.23px;-webkit-text-stroke:0.1px #1a1a1a">2/18/2026</div>
<div class="a" style="left:619px;top:286.85px;font-size:10.2px;line-height:10.2px;color:#1a1a1a;font-weight:normal;font-style:normal;letter-spacing:-0.23px;-webkit-text-stroke:0.1px #1a1a1a">02-2026</div>
<div class="a" style="left:689.4px;top:286.85px;font-size:10.2px;line-height:10.2px;color:#1a1a1a;font-weight:normal;font-style:normal;letter-spacing:-0.23px;-webkit-text-stroke:0.1px #1a1a1a">ABCSTUDIOS</div>
<div class="a" style="left:773.5px;top:286.85px;font-size:10.2px;line-height:10.2px;color:#1a1a1a;font-weight:normal;font-style:normal;letter-spacing:-0.23px;-webkit-text-stroke:0.1px #1a1a1a">ABC Studios Inc</div>
<div class="a" style="left:970.7px;top:286.81px;font-size:10px;line-height:10px;color:#222;font-weight:normal;font-style:normal;">X</div>
<svg style="left:188.6px;top:306.15999999999997px;" width="7" height="10.8" viewBox="0 0 7 10.8"><path d="M3.2 0.4 Q5.9 1.6 5.9 4.2 V8.0 Q5.9 10.100000000000001 3.2 10.100000000000001 Q0.5 10.100000000000001 0.5 8.0 V4.2 Q0.5 1.6 3.2 0.4 Z" fill="#a9acb2" stroke="#3a3a3a" stroke-width="1.05"/><path d="M2.3 3 V7.6000000000000005" stroke="#e6e6e6" stroke-width="1"/></svg>
<svg style="left:204.8px;top:306.15999999999997px;" width="10" height="10.8" viewBox="0 0 10 10.8"><path d="M0.6 0.6 H5.8 L9 3.8 V10.0 H0.6 Z" fill="#fff" stroke="#2a2a2a" stroke-width="1.1" stroke-linejoin="round"/><path d="M5.8 0.6 V3.8 H9 Z" fill="#2a2a2a" stroke="#2a2a2a" stroke-width="0.8" stroke-linejoin="round"/></svg>
<div class="a" style="left:220.9px;top:307.93px;font-size:10.2px;line-height:10.2px;color:#1a1a1a;font-weight:normal;font-style:normal;letter-spacing:-0.23px;-webkit-text-stroke:0.1px #1a1a1a">Invoice</div>
<div class="a" style="left:324.2px;top:307.93px;font-size:10.2px;line-height:10.2px;color:#3b8cc0;font-weight:normal;font-style:normal;letter-spacing:-0.23px;-webkit-text-stroke:0.1px #3b8cc0">AR015064</div>
<div class="a" style="left:422.9px;top:307.93px;font-size:10.2px;line-height:10.2px;color:#1a1a1a;font-weight:normal;font-style:normal;letter-spacing:-0.23px;-webkit-text-stroke:0.1px #1a1a1a">Open</div>
<div class="a" style="left:548.6px;top:307.93px;font-size:10.2px;line-height:10.2px;color:#1a1a1a;font-weight:normal;font-style:normal;letter-spacing:-0.23px;-webkit-text-stroke:0.1px #1a1a1a">2/18/2026</div>
<div class="a" style="left:619px;top:307.93px;font-size:10.2px;line-height:10.2px;color:#1a1a1a;font-weight:normal;font-style:normal;letter-spacing:-0.23px;-webkit-text-stroke:0.1px #1a1a1a">02-2026</div>
<div class="a" style="left:689.4px;top:307.93px;font-size:10.2px;line-height:10.2px;color:#1a1a1a;font-weight:normal;font-style:normal;letter-spacing:-0.23px;-webkit-text-stroke:0.1px #1a1a1a">ABCSTUDIOS</div>
<div class="a" style="left:773.5px;top:307.93px;font-size:10.2px;line-height:10.2px;color:#1a1a1a;font-weight:normal;font-style:normal;letter-spacing:-0.23px;-webkit-text-stroke:0.1px #1a1a1a">ABC Studios Inc</div>
<div class="a" style="left:970.7px;top:307.89px;font-size:10px;line-height:10px;color:#222;font-weight:normal;font-style:normal;">X</div>
<svg style="left:188.6px;top:327.24px;" width="7" height="10.8" viewBox="0 0 7 10.8"><path d="M3.2 0.4 Q5.9 1.6 5.9 4.2 V8.0 Q5.9 10.100000000000001 3.2 10.100000000000001 Q0.5 10.100000000000001 0.5 8.0 V4.2 Q0.5 1.6 3.2 0.4 Z" fill="#a9acb2" stroke="#3a3a3a" stroke-width="1.05"/><path d="M2.3 3 V7.6000000000000005" stroke="#e6e6e6" stroke-width="1"/></svg>
<svg style="left:204.8px;top:327.24px;" width="10" height="10.8" viewBox="0 0 10 10.8"><path d="M0.6 0.6 H5.8 L9 3.8 V10.0 H0.6 Z" fill="#fff" stroke="#2a2a2a" stroke-width="1.1" stroke-linejoin="round"/><path d="M5.8 0.6 V3.8 H9 Z" fill="#2a2a2a" stroke="#2a2a2a" stroke-width="0.8" stroke-linejoin="round"/></svg>
<div class="a" style="left:220.9px;top:329.01px;font-size:10.2px;line-height:10.2px;color:#1a1a1a;font-weight:normal;font-style:normal;letter-spacing:-0.23px;-webkit-text-stroke:0.1px #1a1a1a">Invoice</div>
<div class="a" style="left:324.2px;top:329.01px;font-size:10.2px;line-height:10.2px;color:#3b8cc0;font-weight:normal;font-style:normal;letter-spacing:-0.23px;-webkit-text-stroke:0.1px #3b8cc0">AR015063</div>
<div class="a" style="left:422.9px;top:329.01px;font-size:10.2px;line-height:10.2px;color:#1a1a1a;font-weight:normal;font-style:normal;letter-spacing:-0.23px;-webkit-text-stroke:0.1px #1a1a1a">Closed</div>
<div class="a" style="left:548.6px;top:329.01px;font-size:10.2px;line-height:10.2px;color:#1a1a1a;font-weight:normal;font-style:normal;letter-spacing:-0.23px;-webkit-text-stroke:0.1px #1a1a1a">2/10/2026</div>
<div class="a" style="left:619px;top:329.01px;font-size:10.2px;line-height:10.2px;color:#1a1a1a;font-weight:normal;font-style:normal;letter-spacing:-0.23px;-webkit-text-stroke:0.1px #1a1a1a">02-2026</div>
<div class="a" style="left:689.4px;top:329.01px;font-size:10.2px;line-height:10.2px;color:#1a1a1a;font-weight:normal;font-style:normal;letter-spacing:-0.23px;-webkit-text-stroke:0.1px #1a1a1a">ABCSTUDIOS</div>
<div class="a" style="left:773.5px;top:329.01px;font-size:10.2px;line-height:10.2px;color:#1a1a1a;font-weight:normal;font-style:normal;letter-spacing:-0.23px;-webkit-text-stroke:0.1px #1a1a1a">ABC Studios Inc</div>
<div class="a" style="left:970.7px;top:328.98px;font-size:10px;line-height:10px;color:#222;font-weight:normal;font-style:normal;">X</div>
<svg style="left:188.6px;top:348.32px;" width="7" height="10.8" viewBox="0 0 7 10.8"><path d="M3.2 0.4 Q5.9 1.6 5.9 4.2 V8.0 Q5.9 10.100000000000001 3.2 10.100000000000001 Q0.5 10.100000000000001 0.5 8.0 V4.2 Q0.5 1.6 3.2 0.4 Z" fill="#a9acb2" stroke="#3a3a3a" stroke-width="1.05"/><path d="M2.3 3 V7.6000000000000005" stroke="#e6e6e6" stroke-width="1"/></svg>
<svg style="left:204.8px;top:348.32px;" width="10" height="10.8" viewBox="0 0 10 10.8"><path d="M0.6 0.6 H5.8 L9 3.8 V10.0 H0.6 Z" fill="#fff" stroke="#2a2a2a" stroke-width="1.1" stroke-linejoin="round"/><path d="M5.8 0.6 V3.8 H9 Z" fill="#2a2a2a" stroke="#2a2a2a" stroke-width="0.8" stroke-linejoin="round"/></svg>
<div class="a" style="left:220.9px;top:350.09px;font-size:10.2px;line-height:10.2px;color:#1a1a1a;font-weight:normal;font-style:normal;letter-spacing:-0.23px;-webkit-text-stroke:0.1px #1a1a1a">Invoice</div>
<div class="a" style="left:324.2px;top:350.09px;font-size:10.2px;line-height:10.2px;color:#3b8cc0;font-weight:normal;font-style:normal;letter-spacing:-0.23px;-webkit-text-stroke:0.1px #3b8cc0">AR015062</div>
<div class="a" style="left:422.9px;top:350.09px;font-size:10.2px;line-height:10.2px;color:#1a1a1a;font-weight:normal;font-style:normal;letter-spacing:-0.23px;-webkit-text-stroke:0.1px #1a1a1a">Closed</div>
<div class="a" style="left:548.6px;top:350.09px;font-size:10.2px;line-height:10.2px;color:#1a1a1a;font-weight:normal;font-style:normal;letter-spacing:-0.23px;-webkit-text-stroke:0.1px #1a1a1a">2/9/2026</div>
<div class="a" style="left:619px;top:350.09px;font-size:10.2px;line-height:10.2px;color:#1a1a1a;font-weight:normal;font-style:normal;letter-spacing:-0.23px;-webkit-text-stroke:0.1px #1a1a1a">02-2026</div>
<div class="a" style="left:689.4px;top:350.09px;font-size:10.2px;line-height:10.2px;color:#1a1a1a;font-weight:normal;font-style:normal;letter-spacing:-0.23px;-webkit-text-stroke:0.1px #1a1a1a">ABCSTUDIOS</div>
<div class="a" style="left:773.5px;top:350.09px;font-size:10.2px;line-height:10.2px;color:#1a1a1a;font-weight:normal;font-style:normal;letter-spacing:-0.23px;-webkit-text-stroke:0.1px #1a1a1a">ABC Studios Inc</div>
<div class="a" style="left:970.7px;top:350.06px;font-size:10px;line-height:10px;color:#222;font-weight:normal;font-style:normal;">X</div>
<svg style="left:188.6px;top:369.4px;" width="7" height="10.8" viewBox="0 0 7 10.8"><path d="M3.2 0.4 Q5.9 1.6 5.9 4.2 V8.0 Q5.9 10.100000000000001 3.2 10.100000000000001 Q0.5 10.100000000000001 0.5 8.0 V4.2 Q0.5 1.6 3.2 0.4 Z" fill="#a9acb2" stroke="#3a3a3a" stroke-width="1.05"/><path d="M2.3 3 V7.6000000000000005" stroke="#e6e6e6" stroke-width="1"/></svg>
<svg style="left:204.8px;top:369.4px;" width="10" height="10.8" viewBox="0 0 10 10.8"><path d="M0.6 0.6 H5.8 L9 3.8 V10.0 H0.6 Z" fill="#fff" stroke="#2a2a2a" stroke-width="1.1" stroke-linejoin="round"/><path d="M5.8 0.6 V3.8 H9 Z" fill="#2a2a2a" stroke="#2a2a2a" stroke-width="0.8" stroke-linejoin="round"/></svg>
<div class="a" style="left:220.9px;top:371.17px;font-size:10.2px;line-height:10.2px;color:#1a1a1a;font-weight:normal;font-style:normal;letter-spacing:-0.23px;-webkit-text-stroke:0.1px #1a1a1a">Invoice</div>
<div class="a" style="left:324.2px;top:371.17px;font-size:10.2px;line-height:10.2px;color:#3b8cc0;font-weight:normal;font-style:normal;letter-spacing:-0.23px;-webkit-text-stroke:0.1px #3b8cc0">AR015061</div>
<div class="a" style="left:422.9px;top:371.17px;font-size:10.2px;line-height:10.2px;color:#1a1a1a;font-weight:normal;font-style:normal;letter-spacing:-0.23px;-webkit-text-stroke:0.1px #1a1a1a">On Hold</div>
<div class="a" style="left:548.6px;top:371.17px;font-size:10.2px;line-height:10.2px;color:#1a1a1a;font-weight:normal;font-style:normal;letter-spacing:-0.23px;-webkit-text-stroke:0.1px #1a1a1a">2/9/2026</div>
<div class="a" style="left:619px;top:371.17px;font-size:10.2px;line-height:10.2px;color:#1a1a1a;font-weight:normal;font-style:normal;letter-spacing:-0.23px;-webkit-text-stroke:0.1px #1a1a1a">02-2026</div>
<div class="a" style="left:689.4px;top:371.17px;font-size:10.2px;line-height:10.2px;color:#1a1a1a;font-weight:normal;font-style:normal;letter-spacing:-0.23px;-webkit-text-stroke:0.1px #1a1a1a">ABCSTUDIOS</div>
<div class="a" style="left:773.5px;top:371.17px;font-size:10.2px;line-height:10.2px;color:#1a1a1a;font-weight:normal;font-style:normal;letter-spacing:-0.23px;-webkit-text-stroke:0.1px #1a1a1a">ABC Studios Inc</div>
<div class="a" style="left:970.7px;top:371.13px;font-size:10px;line-height:10px;color:#222;font-weight:normal;font-style:normal;">X</div>
<svg style="left:188.6px;top:390.48px;" width="7" height="10.8" viewBox="0 0 7 10.8"><path d="M3.2 0.4 Q5.9 1.6 5.9 4.2 V8.0 Q5.9 10.100000000000001 3.2 10.100000000000001 Q0.5 10.100000000000001 0.5 8.0 V4.2 Q0.5 1.6 3.2 0.4 Z" fill="#a9acb2" stroke="#3a3a3a" stroke-width="1.05"/><path d="M2.3 3 V7.6000000000000005" stroke="#e6e6e6" stroke-width="1"/></svg>
<svg style="left:204.8px;top:390.48px;" width="10" height="10.8" viewBox="0 0 10 10.8"><path d="M0.6 0.6 H5.8 L9 3.8 V10.0 H0.6 Z" fill="#fff" stroke="#2a2a2a" stroke-width="1.1" stroke-linejoin="round"/><path d="M5.8 0.6 V3.8 H9 Z" fill="#2a2a2a" stroke="#2a2a2a" stroke-width="0.8" stroke-linejoin="round"/></svg>
<div class="a" style="left:220.9px;top:392.25px;font-size:10.2px;line-height:10.2px;color:#1a1a1a;font-weight:normal;font-style:normal;letter-spacing:-0.23px;-webkit-text-stroke:0.1px #1a1a1a">Invoice</div>
<div class="a" style="left:324.2px;top:392.25px;font-size:10.2px;line-height:10.2px;color:#3b8cc0;font-weight:normal;font-style:normal;letter-spacing:-0.23px;-webkit-text-stroke:0.1px #3b8cc0">AR015060</div>
<div class="a" style="left:422.9px;top:392.25px;font-size:10.2px;line-height:10.2px;color:#1a1a1a;font-weight:normal;font-style:normal;letter-spacing:-0.23px;-webkit-text-stroke:0.1px #1a1a1a">Closed</div>
<div class="a" style="left:548.6px;top:392.25px;font-size:10.2px;line-height:10.2px;color:#1a1a1a;font-weight:normal;font-style:normal;letter-spacing:-0.23px;-webkit-text-stroke:0.1px #1a1a1a">2/8/2026</div>
<div class="a" style="left:619px;top:392.25px;font-size:10.2px;line-height:10.2px;color:#1a1a1a;font-weight:normal;font-style:normal;letter-spacing:-0.23px;-webkit-text-stroke:0.1px #1a1a1a">02-2026</div>
<div class="a" style="left:689.4px;top:392.25px;font-size:10.2px;line-height:10.2px;color:#1a1a1a;font-weight:normal;font-style:normal;letter-spacing:-0.23px;-webkit-text-stroke:0.1px #1a1a1a">ABCSTUDIOS</div>
<div class="a" style="left:773.5px;top:392.25px;font-size:10.2px;line-height:10.2px;color:#1a1a1a;font-weight:normal;font-style:normal;letter-spacing:-0.23px;-webkit-text-stroke:0.1px #1a1a1a">ABC Studios Inc</div>
<div class="a" style="left:970.7px;top:392.22px;font-size:10px;line-height:10px;color:#222;font-weight:normal;font-style:normal;">X</div>
<svg style="left:188.6px;top:411.56px;" width="7" height="10.8" viewBox="0 0 7 10.8"><path d="M3.2 0.4 Q5.9 1.6 5.9 4.2 V8.0 Q5.9 10.100000000000001 3.2 10.100000000000001 Q0.5 10.100000000000001 0.5 8.0 V4.2 Q0.5 1.6 3.2 0.4 Z" fill="#a9acb2" stroke="#3a3a3a" stroke-width="1.05"/><path d="M2.3 3 V7.6000000000000005" stroke="#e6e6e6" stroke-width="1"/></svg>
<svg style="left:204.8px;top:411.56px;" width="10" height="10.8" viewBox="0 0 10 10.8"><path d="M0.6 0.6 H5.8 L9 3.8 V10.0 H0.6 Z" fill="#fff" stroke="#2a2a2a" stroke-width="1.1" stroke-linejoin="round"/><path d="M5.8 0.6 V3.8 H9 Z" fill="#2a2a2a" stroke="#2a2a2a" stroke-width="0.8" stroke-linejoin="round"/></svg>
<div class="a" style="left:220.9px;top:413.33px;font-size:10.2px;line-height:10.2px;color:#1a1a1a;font-weight:normal;font-style:normal;letter-spacing:-0.23px;-webkit-text-stroke:0.1px #1a1a1a">Invoice</div>
<div class="a" style="left:324.2px;top:413.33px;font-size:10.2px;line-height:10.2px;color:#3b8cc0;font-weight:normal;font-style:normal;letter-spacing:-0.23px;-webkit-text-stroke:0.1px #3b8cc0">AR015059</div>
<div class="a" style="left:422.9px;top:413.33px;font-size:10.2px;line-height:10.2px;color:#1a1a1a;font-weight:normal;font-style:normal;letter-spacing:-0.23px;-webkit-text-stroke:0.1px #1a1a1a">Closed</div>
<div class="a" style="left:548.6px;top:413.33px;font-size:10.2px;line-height:10.2px;color:#1a1a1a;font-weight:normal;font-style:normal;letter-spacing:-0.23px;-webkit-text-stroke:0.1px #1a1a1a">2/8/2026</div>
<div class="a" style="left:619px;top:413.33px;font-size:10.2px;line-height:10.2px;color:#1a1a1a;font-weight:normal;font-style:normal;letter-spacing:-0.23px;-webkit-text-stroke:0.1px #1a1a1a">02-2026</div>
<div class="a" style="left:689.4px;top:413.33px;font-size:10.2px;line-height:10.2px;color:#1a1a1a;font-weight:normal;font-style:normal;letter-spacing:-0.23px;-webkit-text-stroke:0.1px #1a1a1a">ABCSTUDIOS</div>
<div class="a" style="left:773.5px;top:413.33px;font-size:10.2px;line-height:10.2px;color:#1a1a1a;font-weight:normal;font-style:normal;letter-spacing:-0.23px;-webkit-text-stroke:0.1px #1a1a1a">ABC Studios Inc</div>
<div class="a" style="left:970.7px;top:413.30px;font-size:10px;line-height:10px;color:#222;font-weight:normal;font-style:normal;">X</div>
<svg style="left:188.6px;top:432.64px;" width="7" height="10.8" viewBox="0 0 7 10.8"><path d="M3.2 0.4 Q5.9 1.6 5.9 4.2 V8.0 Q5.9 10.100000000000001 3.2 10.100000000000001 Q0.5 10.100000000000001 0.5 8.0 V4.2 Q0.5 1.6 3.2 0.4 Z" fill="#a9acb2" stroke="#3a3a3a" stroke-width="1.05"/><path d="M2.3 3 V7.6000000000000005" stroke="#e6e6e6" stroke-width="1"/></svg>
<svg style="left:204.8px;top:432.64px;" width="10" height="10.8" viewBox="0 0 10 10.8"><path d="M0.6 0.6 H5.8 L9 3.8 V10.0 H0.6 Z" fill="#fff" stroke="#2a2a2a" stroke-width="1.1" stroke-linejoin="round"/><path d="M5.8 0.6 V3.8 H9 Z" fill="#2a2a2a" stroke="#2a2a2a" stroke-width="0.8" stroke-linejoin="round"/></svg>
<div class="a" style="left:220.9px;top:434.41px;font-size:10.2px;line-height:10.2px;color:#1a1a1a;font-weight:normal;font-style:normal;letter-spacing:-0.23px;-webkit-text-stroke:0.1px #1a1a1a">Invoice</div>
<div class="a" style="left:324.2px;top:434.41px;font-size:10.2px;line-height:10.2px;color:#3b8cc0;font-weight:normal;font-style:normal;letter-spacing:-0.23px;-webkit-text-stroke:0.1px #3b8cc0">AR015058</div>
<div class="a" style="left:422.9px;top:434.41px;font-size:10.2px;line-height:10.2px;color:#1a1a1a;font-weight:normal;font-style:normal;letter-spacing:-0.23px;-webkit-text-stroke:0.1px #1a1a1a">Open</div>
<div class="a" style="left:548.6px;top:434.41px;font-size:10.2px;line-height:10.2px;color:#1a1a1a;font-weight:normal;font-style:normal;letter-spacing:-0.23px;-webkit-text-stroke:0.1px #1a1a1a">2/8/2026</div>
<div class="a" style="left:619px;top:434.41px;font-size:10.2px;line-height:10.2px;color:#1a1a1a;font-weight:normal;font-style:normal;letter-spacing:-0.23px;-webkit-text-stroke:0.1px #1a1a1a">02-2026</div>
<div class="a" style="left:689.4px;top:434.41px;font-size:10.2px;line-height:10.2px;color:#1a1a1a;font-weight:normal;font-style:normal;letter-spacing:-0.23px;-webkit-text-stroke:0.1px #1a1a1a">ABCSTUDIOS</div>
<div class="a" style="left:773.5px;top:434.41px;font-size:10.2px;line-height:10.2px;color:#1a1a1a;font-weight:normal;font-style:normal;letter-spacing:-0.23px;-webkit-text-stroke:0.1px #1a1a1a">ABC Studios Inc</div>
<div class="a" style="left:970.7px;top:434.38px;font-size:10px;line-height:10px;color:#222;font-weight:normal;font-style:normal;">X</div>
<svg style="left:188.6px;top:453.71999999999997px;" width="7" height="10.8" viewBox="0 0 7 10.8"><path d="M3.2 0.4 Q5.9 1.6 5.9 4.2 V8.0 Q5.9 10.100000000000001 3.2 10.100000000000001 Q0.5 10.100000000000001 0.5 8.0 V4.2 Q0.5 1.6 3.2 0.4 Z" fill="#a9acb2" stroke="#3a3a3a" stroke-width="1.05"/><path d="M2.3 3 V7.6000000000000005" stroke="#e6e6e6" stroke-width="1"/></svg>
<svg style="left:204.8px;top:453.71999999999997px;" width="10" height="10.8" viewBox="0 0 10 10.8"><path d="M0.6 0.6 H5.8 L9 3.8 V10.0 H0.6 Z" fill="#fff" stroke="#2a2a2a" stroke-width="1.1" stroke-linejoin="round"/><path d="M5.8 0.6 V3.8 H9 Z" fill="#2a2a2a" stroke="#2a2a2a" stroke-width="0.8" stroke-linejoin="round"/></svg>
<div class="a" style="left:220.9px;top:455.49px;font-size:10.2px;line-height:10.2px;color:#1a1a1a;font-weight:normal;font-style:normal;letter-spacing:-0.23px;-webkit-text-stroke:0.1px #1a1a1a">Invoice</div>
<div class="a" style="left:324.2px;top:455.49px;font-size:10.2px;line-height:10.2px;color:#3b8cc0;font-weight:normal;font-style:normal;letter-spacing:-0.23px;-webkit-text-stroke:0.1px #3b8cc0">AR015057</div>
<div class="a" style="left:422.9px;top:455.49px;font-size:10.2px;line-height:10.2px;color:#1a1a1a;font-weight:normal;font-style:normal;letter-spacing:-0.23px;-webkit-text-stroke:0.1px #1a1a1a">Open</div>
<div class="a" style="left:548.6px;top:455.49px;font-size:10.2px;line-height:10.2px;color:#1a1a1a;font-weight:normal;font-style:normal;letter-spacing:-0.23px;-webkit-text-stroke:0.1px #1a1a1a">2/8/2026</div>
<div class="a" style="left:619px;top:455.49px;font-size:10.2px;line-height:10.2px;color:#1a1a1a;font-weight:normal;font-style:normal;letter-spacing:-0.23px;-webkit-text-stroke:0.1px #1a1a1a">02-2026</div>
<div class="a" style="left:689.4px;top:455.49px;font-size:10.2px;line-height:10.2px;color:#1a1a1a;font-weight:normal;font-style:normal;letter-spacing:-0.23px;-webkit-text-stroke:0.1px #1a1a1a">ABCHOLDING</div>
<div class="a" style="left:773.5px;top:455.49px;font-size:10.2px;line-height:10.2px;color:#1a1a1a;font-weight:normal;font-style:normal;letter-spacing:-0.23px;-webkit-text-stroke:0.1px #1a1a1a">ABC Holdings Inc</div>
<div class="a" style="left:970.7px;top:455.45px;font-size:10px;line-height:10px;color:#222;font-weight:normal;font-style:normal;">X</div>
<svg style="left:188.6px;top:474.79999999999995px;" width="7" height="10.8" viewBox="0 0 7 10.8"><path d="M3.2 0.4 Q5.9 1.6 5.9 4.2 V8.0 Q5.9 10.100000000000001 3.2 10.100000000000001 Q0.5 10.100000000000001 0.5 8.0 V4.2 Q0.5 1.6 3.2 0.4 Z" fill="#a9acb2" stroke="#3a3a3a" stroke-width="1.05"/><path d="M2.3 3 V7.6000000000000005" stroke="#e6e6e6" stroke-width="1"/></svg>
<svg style="left:204.8px;top:474.79999999999995px;" width="10" height="10.8" viewBox="0 0 10 10.8"><path d="M0.6 0.6 H5.8 L9 3.8 V10.0 H0.6 Z" fill="#fff" stroke="#2a2a2a" stroke-width="1.1" stroke-linejoin="round"/><path d="M5.8 0.6 V3.8 H9 Z" fill="#2a2a2a" stroke="#2a2a2a" stroke-width="0.8" stroke-linejoin="round"/></svg>
<div class="a" style="left:220.9px;top:476.57px;font-size:10.2px;line-height:10.2px;color:#1a1a1a;font-weight:normal;font-style:normal;letter-spacing:-0.23px;-webkit-text-stroke:0.1px #1a1a1a">Invoice</div>
<div class="a" style="left:324.2px;top:476.57px;font-size:10.2px;line-height:10.2px;color:#3b8cc0;font-weight:normal;font-style:normal;letter-spacing:-0.23px;-webkit-text-stroke:0.1px #3b8cc0">AR015056</div>
<div class="a" style="left:422.9px;top:476.57px;font-size:10.2px;line-height:10.2px;color:#1a1a1a;font-weight:normal;font-style:normal;letter-spacing:-0.23px;-webkit-text-stroke:0.1px #1a1a1a">Open</div>
<div class="a" style="left:548.6px;top:476.57px;font-size:10.2px;line-height:10.2px;color:#1a1a1a;font-weight:normal;font-style:normal;letter-spacing:-0.23px;-webkit-text-stroke:0.1px #1a1a1a">2/8/2026</div>
<div class="a" style="left:619px;top:476.57px;font-size:10.2px;line-height:10.2px;color:#1a1a1a;font-weight:normal;font-style:normal;letter-spacing:-0.23px;-webkit-text-stroke:0.1px #1a1a1a">02-2026</div>
<div class="a" style="left:689.4px;top:476.57px;font-size:10.2px;line-height:10.2px;color:#1a1a1a;font-weight:normal;font-style:normal;letter-spacing:-0.23px;-webkit-text-stroke:0.1px #1a1a1a">ABCSTUDIOS</div>
<div class="a" style="left:773.5px;top:476.57px;font-size:10.2px;line-height:10.2px;color:#1a1a1a;font-weight:normal;font-style:normal;letter-spacing:-0.23px;-webkit-text-stroke:0.1px #1a1a1a">ABC Studios Inc</div>
<div class="a" style="left:970.7px;top:476.53px;font-size:10px;line-height:10px;color:#222;font-weight:normal;font-style:normal;">X</div>
<svg style="left:188.6px;top:495.88px;" width="7" height="10.8" viewBox="0 0 7 10.8"><path d="M3.2 0.4 Q5.9 1.6 5.9 4.2 V8.0 Q5.9 10.100000000000001 3.2 10.100000000000001 Q0.5 10.100000000000001 0.5 8.0 V4.2 Q0.5 1.6 3.2 0.4 Z" fill="#a9acb2" stroke="#3a3a3a" stroke-width="1.05"/><path d="M2.3 3 V7.6000000000000005" stroke="#e6e6e6" stroke-width="1"/></svg>
<svg style="left:204.8px;top:495.88px;" width="10" height="10.8" viewBox="0 0 10 10.8"><path d="M0.6 0.6 H5.8 L9 3.8 V10.0 H0.6 Z" fill="#fff" stroke="#2a2a2a" stroke-width="1.1" stroke-linejoin="round"/><path d="M5.8 0.6 V3.8 H9 Z" fill="#2a2a2a" stroke="#2a2a2a" stroke-width="0.8" stroke-linejoin="round"/></svg>
<div class="a" style="left:220.9px;top:497.65px;font-size:10.2px;line-height:10.2px;color:#1a1a1a;font-weight:normal;font-style:normal;letter-spacing:-0.23px;-webkit-text-stroke:0.1px #1a1a1a">Invoice</div>
<div class="a" style="left:324.2px;top:497.65px;font-size:10.2px;line-height:10.2px;color:#3b8cc0;font-weight:normal;font-style:normal;letter-spacing:-0.23px;-webkit-text-stroke:0.1px #3b8cc0">AR015055</div>
<div class="a" style="left:422.9px;top:497.65px;font-size:10.2px;line-height:10.2px;color:#1a1a1a;font-weight:normal;font-style:normal;letter-spacing:-0.23px;-webkit-text-stroke:0.1px #1a1a1a">Open</div>
<div class="a" style="left:548.6px;top:497.65px;font-size:10.2px;line-height:10.2px;color:#1a1a1a;font-weight:normal;font-style:normal;letter-spacing:-0.23px;-webkit-text-stroke:0.1px #1a1a1a">2/8/2026</div>
<div class="a" style="left:619px;top:497.65px;font-size:10.2px;line-height:10.2px;color:#1a1a1a;font-weight:normal;font-style:normal;letter-spacing:-0.23px;-webkit-text-stroke:0.1px #1a1a1a">02-2026</div>
<div class="a" style="left:689.4px;top:497.65px;font-size:10.2px;line-height:10.2px;color:#1a1a1a;font-weight:normal;font-style:normal;letter-spacing:-0.23px;-webkit-text-stroke:0.1px #1a1a1a">ABCSTUDIOS</div>
<div class="a" style="left:773.5px;top:497.65px;font-size:10.2px;line-height:10.2px;color:#1a1a1a;font-weight:normal;font-style:normal;letter-spacing:-0.23px;-webkit-text-stroke:0.1px #1a1a1a">ABC Studios Inc</div>
<div class="a" style="left:970.7px;top:497.62px;font-size:10px;line-height:10px;color:#222;font-weight:normal;font-style:normal;">X</div>
<svg style="left:188.6px;top:516.9599999999999px;" width="7" height="10.8" viewBox="0 0 7 10.8"><path d="M3.2 0.4 Q5.9 1.6 5.9 4.2 V8.0 Q5.9 10.100000000000001 3.2 10.100000000000001 Q0.5 10.100000000000001 0.5 8.0 V4.2 Q0.5 1.6 3.2 0.4 Z" fill="#a9acb2" stroke="#3a3a3a" stroke-width="1.05"/><path d="M2.3 3 V7.6000000000000005" stroke="#e6e6e6" stroke-width="1"/></svg>
<svg style="left:204.8px;top:516.9599999999999px;" width="10" height="10.8" viewBox="0 0 10 10.8"><path d="M0.6 0.6 H5.8 L9 3.8 V10.0 H0.6 Z" fill="#fff" stroke="#2a2a2a" stroke-width="1.1" stroke-linejoin="round"/><path d="M5.8 0.6 V3.8 H9 Z" fill="#2a2a2a" stroke="#2a2a2a" stroke-width="0.8" stroke-linejoin="round"/></svg>
<div class="a" style="left:220.9px;top:518.73px;font-size:10.2px;line-height:10.2px;color:#1a1a1a;font-weight:normal;font-style:normal;letter-spacing:-0.23px;-webkit-text-stroke:0.1px #1a1a1a">Invoice</div>
<div class="a" style="left:324.2px;top:518.73px;font-size:10.2px;line-height:10.2px;color:#3b8cc0;font-weight:normal;font-style:normal;letter-spacing:-0.23px;-webkit-text-stroke:0.1px #3b8cc0">AR015054</div>
<div class="a" style="left:422.9px;top:518.73px;font-size:10.2px;line-height:10.2px;color:#1a1a1a;font-weight:normal;font-style:normal;letter-spacing:-0.23px;-webkit-text-stroke:0.1px #1a1a1a">Open</div>
<div class="a" style="left:548.6px;top:518.73px;font-size:10.2px;line-height:10.2px;color:#1a1a1a;font-weight:normal;font-style:normal;letter-spacing:-0.23px;-webkit-text-stroke:0.1px #1a1a1a">2/8/2026</div>
<div class="a" style="left:619px;top:518.73px;font-size:10.2px;line-height:10.2px;color:#1a1a1a;font-weight:normal;font-style:normal;letter-spacing:-0.23px;-webkit-text-stroke:0.1px #1a1a1a">02-2026</div>
<div class="a" style="left:689.4px;top:518.73px;font-size:10.2px;line-height:10.2px;color:#1a1a1a;font-weight:normal;font-style:normal;letter-spacing:-0.23px;-webkit-text-stroke:0.1px #1a1a1a">ABCHOLDING</div>
<div class="a" style="left:773.5px;top:518.73px;font-size:10.2px;line-height:10.2px;color:#1a1a1a;font-weight:normal;font-style:normal;letter-spacing:-0.23px;-webkit-text-stroke:0.1px #1a1a1a">ABC Holdings Inc</div>
<div class="a" style="left:970.7px;top:518.69px;font-size:10px;line-height:10px;color:#222;font-weight:normal;font-style:normal;">X</div>
<svg style="left:188.6px;top:538.04px;" width="7" height="10.8" viewBox="0 0 7 10.8"><path d="M3.2 0.4 Q5.9 1.6 5.9 4.2 V8.0 Q5.9 10.100000000000001 3.2 10.100000000000001 Q0.5 10.100000000000001 0.5 8.0 V4.2 Q0.5 1.6 3.2 0.4 Z" fill="#a9acb2" stroke="#3a3a3a" stroke-width="1.05"/><path d="M2.3 3 V7.6000000000000005" stroke="#e6e6e6" stroke-width="1"/></svg>
<svg style="left:204.8px;top:538.04px;" width="10" height="10.8" viewBox="0 0 10 10.8"><path d="M0.6 0.6 H5.8 L9 3.8 V10.0 H0.6 Z" fill="#fff" stroke="#2a2a2a" stroke-width="1.1" stroke-linejoin="round"/><path d="M5.8 0.6 V3.8 H9 Z" fill="#2a2a2a" stroke="#2a2a2a" stroke-width="0.8" stroke-linejoin="round"/></svg>
<div class="a" style="left:220.9px;top:539.81px;font-size:10.2px;line-height:10.2px;color:#1a1a1a;font-weight:normal;font-style:normal;letter-spacing:-0.23px;-webkit-text-stroke:0.1px #1a1a1a">Invoice</div>
<div class="a" style="left:324.2px;top:539.81px;font-size:10.2px;line-height:10.2px;color:#3b8cc0;font-weight:normal;font-style:normal;letter-spacing:-0.23px;-webkit-text-stroke:0.1px #3b8cc0">AR015053</div>
<div class="a" style="left:422.9px;top:539.81px;font-size:10.2px;line-height:10.2px;color:#1a1a1a;font-weight:normal;font-style:normal;letter-spacing:-0.23px;-webkit-text-stroke:0.1px #1a1a1a">Open</div>
<div class="a" style="left:548.6px;top:539.81px;font-size:10.2px;line-height:10.2px;color:#1a1a1a;font-weight:normal;font-style:normal;letter-spacing:-0.23px;-webkit-text-stroke:0.1px #1a1a1a">2/8/2026</div>
<div class="a" style="left:619px;top:539.81px;font-size:10.2px;line-height:10.2px;color:#1a1a1a;font-weight:normal;font-style:normal;letter-spacing:-0.23px;-webkit-text-stroke:0.1px #1a1a1a">02-2026</div>
<div class="a" style="left:689.4px;top:539.81px;font-size:10.2px;line-height:10.2px;color:#1a1a1a;font-weight:normal;font-style:normal;letter-spacing:-0.23px;-webkit-text-stroke:0.1px #1a1a1a">ABCSTUDIOS</div>
<div class="a" style="left:773.5px;top:539.81px;font-size:10.2px;line-height:10.2px;color:#1a1a1a;font-weight:normal;font-style:normal;letter-spacing:-0.23px;-webkit-text-stroke:0.1px #1a1a1a">ABC Studios Inc</div>
<div class="a" style="left:970.7px;top:539.77px;font-size:10px;line-height:10px;color:#222;font-weight:normal;font-style:normal;">X</div>
<svg style="left:188.6px;top:559.12px;" width="7" height="10.8" viewBox="0 0 7 10.8"><path d="M3.2 0.4 Q5.9 1.6 5.9 4.2 V8.0 Q5.9 10.100000000000001 3.2 10.100000000000001 Q0.5 10.100000000000001 0.5 8.0 V4.2 Q0.5 1.6 3.2 0.4 Z" fill="#a9acb2" stroke="#3a3a3a" stroke-width="1.05"/><path d="M2.3 3 V7.6000000000000005" stroke="#e6e6e6" stroke-width="1"/></svg>
<svg style="left:204.8px;top:559.12px;" width="10" height="10.8" viewBox="0 0 10 10.8"><path d="M0.6 0.6 H5.8 L9 3.8 V10.0 H0.6 Z" fill="#fff" stroke="#2a2a2a" stroke-width="1.1" stroke-linejoin="round"/><path d="M5.8 0.6 V3.8 H9 Z" fill="#2a2a2a" stroke="#2a2a2a" stroke-width="0.8" stroke-linejoin="round"/></svg>
<div class="a" style="left:220.9px;top:560.89px;font-size:10.2px;line-height:10.2px;color:#1a1a1a;font-weight:normal;font-style:normal;letter-spacing:-0.23px;-webkit-text-stroke:0.1px #1a1a1a">Invoice</div>
<div class="a" style="left:324.2px;top:560.89px;font-size:10.2px;line-height:10.2px;color:#3b8cc0;font-weight:normal;font-style:normal;letter-spacing:-0.23px;-webkit-text-stroke:0.1px #3b8cc0">AR015052</div>
<div class="a" style="left:422.9px;top:560.89px;font-size:10.2px;line-height:10.2px;color:#1a1a1a;font-weight:normal;font-style:normal;letter-spacing:-0.23px;-webkit-text-stroke:0.1px #1a1a1a">Balanced</div>
<div class="a" style="left:548.6px;top:560.89px;font-size:10.2px;line-height:10.2px;color:#1a1a1a;font-weight:normal;font-style:normal;letter-spacing:-0.23px;-webkit-text-stroke:0.1px #1a1a1a">2/8/2026</div>
<div class="a" style="left:619px;top:560.89px;font-size:10.2px;line-height:10.2px;color:#1a1a1a;font-weight:normal;font-style:normal;letter-spacing:-0.23px;-webkit-text-stroke:0.1px #1a1a1a">02-2026</div>
<div class="a" style="left:689.4px;top:560.89px;font-size:10.2px;line-height:10.2px;color:#1a1a1a;font-weight:normal;font-style:normal;letter-spacing:-0.23px;-webkit-text-stroke:0.1px #1a1a1a">ABARTENDE</div>
<div class="a" style="left:773.5px;top:560.89px;font-size:10.2px;line-height:10.2px;color:#1a1a1a;font-weight:normal;font-style:normal;letter-spacing:-0.23px;-webkit-text-stroke:0.1px #1a1a1a">USA Bartending School</div>
<div class="a" style="left:970.7px;top:560.85px;font-size:10px;line-height:10px;color:#222;font-weight:normal;font-style:normal;">X</div>
<svg style="left:188.6px;top:580.1999999999999px;" width="7" height="10.8" viewBox="0 0 7 10.8"><path d="M3.2 0.4 Q5.9 1.6 5.9 4.2 V8.0 Q5.9 10.100000000000001 3.2 10.100000000000001 Q0.5 10.100000000000001 0.5 8.0 V4.2 Q0.5 1.6 3.2 0.4 Z" fill="#a9acb2" stroke="#3a3a3a" stroke-width="1.05"/><path d="M2.3 3 V7.6000000000000005" stroke="#e6e6e6" stroke-width="1"/></svg>
<svg style="left:204.8px;top:580.1999999999999px;" width="10" height="10.8" viewBox="0 0 10 10.8"><path d="M0.6 0.6 H5.8 L9 3.8 V10.0 H0.6 Z" fill="#fff" stroke="#2a2a2a" stroke-width="1.1" stroke-linejoin="round"/><path d="M5.8 0.6 V3.8 H9 Z" fill="#2a2a2a" stroke="#2a2a2a" stroke-width="0.8" stroke-linejoin="round"/></svg>
<div class="a" style="left:220.9px;top:581.97px;font-size:10.2px;line-height:10.2px;color:#1a1a1a;font-weight:normal;font-style:normal;letter-spacing:-0.23px;-webkit-text-stroke:0.1px #1a1a1a">Invoice</div>
<div class="a" style="left:324.2px;top:581.97px;font-size:10.2px;line-height:10.2px;color:#3b8cc0;font-weight:normal;font-style:normal;letter-spacing:-0.23px;-webkit-text-stroke:0.1px #3b8cc0">AR015051</div>
<div class="a" style="left:422.9px;top:581.97px;font-size:10.2px;line-height:10.2px;color:#1a1a1a;font-weight:normal;font-style:normal;letter-spacing:-0.23px;-webkit-text-stroke:0.1px #1a1a1a">Open</div>
<div class="a" style="left:548.6px;top:581.97px;font-size:10.2px;line-height:10.2px;color:#1a1a1a;font-weight:normal;font-style:normal;letter-spacing:-0.23px;-webkit-text-stroke:0.1px #1a1a1a">2/8/2026</div>
<div class="a" style="left:619px;top:581.97px;font-size:10.2px;line-height:10.2px;color:#1a1a1a;font-weight:normal;font-style:normal;letter-spacing:-0.23px;-webkit-text-stroke:0.1px #1a1a1a">02-2026</div>
<div class="a" style="left:689.4px;top:581.97px;font-size:10.2px;line-height:10.2px;color:#1a1a1a;font-weight:normal;font-style:normal;letter-spacing:-0.23px;-webkit-text-stroke:0.1px #1a1a1a">AACUSTOMER</div>
<div class="a" style="left:773.5px;top:581.97px;font-size:10.2px;line-height:10.2px;color:#1a1a1a;font-weight:normal;font-style:normal;letter-spacing:-0.23px;-webkit-text-stroke:0.1px #1a1a1a">Alta Ace</div>
<div class="a" style="left:970.7px;top:581.93px;font-size:10px;line-height:10px;color:#222;font-weight:normal;font-style:normal;">X</div>
<svg style="left:188.6px;top:601.28px;" width="7" height="10.8" viewBox="0 0 7 10.8"><path d="M3.2 0.4 Q5.9 1.6 5.9 4.2 V8.0 Q5.9 10.100000000000001 3.2 10.100000000000001 Q0.5 10.100000000000001 0.5 8.0 V4.2 Q0.5 1.6 3.2 0.4 Z" fill="#a9acb2" stroke="#3a3a3a" stroke-width="1.05"/><path d="M2.3 3 V7.6000000000000005" stroke="#e6e6e6" stroke-width="1"/></svg>
<svg style="left:204.8px;top:601.28px;" width="10" height="10.8" viewBox="0 0 10 10.8"><path d="M0.6 0.6 H5.8 L9 3.8 V10.0 H0.6 Z" fill="#fff" stroke="#2a2a2a" stroke-width="1.1" stroke-linejoin="round"/><path d="M5.8 0.6 V3.8 H9 Z" fill="#2a2a2a" stroke="#2a2a2a" stroke-width="0.8" stroke-linejoin="round"/></svg>
<div class="a" style="left:220.9px;top:603.05px;font-size:10.2px;line-height:10.2px;color:#1a1a1a;font-weight:normal;font-style:normal;letter-spacing:-0.23px;-webkit-text-stroke:0.1px #1a1a1a">Invoice</div>
<div class="a" style="left:324.2px;top:603.05px;font-size:10.2px;line-height:10.2px;color:#3b8cc0;font-weight:normal;font-style:normal;letter-spacing:-0.23px;-webkit-text-stroke:0.1px #3b8cc0">AR015050</div>
<div class="a" style="left:422.9px;top:603.05px;font-size:10.2px;line-height:10.2px;color:#1a1a1a;font-weight:normal;font-style:normal;letter-spacing:-0.23px;-webkit-text-stroke:0.1px #1a1a1a">Open</div>
<div class="a" style="left:548.6px;top:603.05px;font-size:10.2px;line-height:10.2px;color:#1a1a1a;font-weight:normal;font-style:normal;letter-spacing:-0.23px;-webkit-text-stroke:0.1px #1a1a1a">2/8/2026</div>
<div class="a" style="left:619px;top:603.05px;font-size:10.2px;line-height:10.2px;color:#1a1a1a;font-weight:normal;font-style:normal;letter-spacing:-0.23px;-webkit-text-stroke:0.1px #1a1a1a">02-2026</div>
<div class="a" style="left:689.4px;top:603.05px;font-size:10.2px;line-height:10.2px;color:#1a1a1a;font-weight:normal;font-style:normal;letter-spacing:-0.23px;-webkit-text-stroke:0.1px #1a1a1a">ABCSTUDIOS</div>
<div class="a" style="left:773.5px;top:603.05px;font-size:10.2px;line-height:10.2px;color:#1a1a1a;font-weight:normal;font-style:normal;letter-spacing:-0.23px;-webkit-text-stroke:0.1px #1a1a1a">ABC Studios Inc</div>
<div class="a" style="left:970.7px;top:603.01px;font-size:10px;line-height:10px;color:#222;font-weight:normal;font-style:normal;">X</div>
<svg style="left:188.6px;top:622.36px;" width="7" height="10.8" viewBox="0 0 7 10.8"><path d="M3.2 0.4 Q5.9 1.6 5.9 4.2 V8.0 Q5.9 10.100000000000001 3.2 10.100000000000001 Q0.5 10.100000000000001 0.5 8.0 V4.2 Q0.5 1.6 3.2 0.4 Z" fill="#a9acb2" stroke="#3a3a3a" stroke-width="1.05"/><path d="M2.3 3 V7.6000000000000005" stroke="#e6e6e6" stroke-width="1"/></svg>
<svg style="left:204.8px;top:622.36px;" width="10" height="10.8" viewBox="0 0 10 10.8"><path d="M0.6 0.6 H5.8 L9 3.8 V10.0 H0.6 Z" fill="#fff" stroke="#2a2a2a" stroke-width="1.1" stroke-linejoin="round"/><path d="M5.8 0.6 V3.8 H9 Z" fill="#2a2a2a" stroke="#2a2a2a" stroke-width="0.8" stroke-linejoin="round"/></svg>
<div class="a" style="left:220.9px;top:624.13px;font-size:10.2px;line-height:10.2px;color:#1a1a1a;font-weight:normal;font-style:normal;letter-spacing:-0.23px;-webkit-text-stroke:0.1px #1a1a1a">Invoice</div>
<div class="a" style="left:324.2px;top:624.13px;font-size:10.2px;line-height:10.2px;color:#3b8cc0;font-weight:normal;font-style:normal;letter-spacing:-0.23px;-webkit-text-stroke:0.1px #3b8cc0">AR015049</div>
<div class="a" style="left:422.9px;top:624.13px;font-size:10.2px;line-height:10.2px;color:#1a1a1a;font-weight:normal;font-style:normal;letter-spacing:-0.23px;-webkit-text-stroke:0.1px #1a1a1a">Open</div>
<div class="a" style="left:548.6px;top:624.13px;font-size:10.2px;line-height:10.2px;color:#1a1a1a;font-weight:normal;font-style:normal;letter-spacing:-0.23px;-webkit-text-stroke:0.1px #1a1a1a">2/8/2026</div>
<div class="a" style="left:619px;top:624.13px;font-size:10.2px;line-height:10.2px;color:#1a1a1a;font-weight:normal;font-style:normal;letter-spacing:-0.23px;-webkit-text-stroke:0.1px #1a1a1a">02-2026</div>
<div class="a" style="left:689.4px;top:624.13px;font-size:10.2px;line-height:10.2px;color:#1a1a1a;font-weight:normal;font-style:normal;letter-spacing:-0.23px;-webkit-text-stroke:0.1px #1a1a1a">ABCSTUDIOS</div>
<div class="a" style="left:773.5px;top:624.13px;font-size:10.2px;line-height:10.2px;color:#1a1a1a;font-weight:normal;font-style:normal;letter-spacing:-0.23px;-webkit-text-stroke:0.1px #1a1a1a">ABC Studios Inc</div>
<div class="a" style="left:970.7px;top:624.09px;font-size:10px;line-height:10px;color:#222;font-weight:normal;font-style:normal;">X</div>
<svg style="left:188.6px;top:643.4399999999999px;" width="7" height="10.8" viewBox="0 0 7 10.8"><path d="M3.2 0.4 Q5.9 1.6 5.9 4.2 V8.0 Q5.9 10.100000000000001 3.2 10.100000000000001 Q0.5 10.100000000000001 0.5 8.0 V4.2 Q0.5 1.6 3.2 0.4 Z" fill="#a9acb2" stroke="#3a3a3a" stroke-width="1.05"/><path d="M2.3 3 V7.6000000000000005" stroke="#e6e6e6" stroke-width="1"/></svg>
<svg style="left:204.8px;top:643.4399999999999px;" width="10" height="10.8" viewBox="0 0 10 10.8"><path d="M0.6 0.6 H5.8 L9 3.8 V10.0 H0.6 Z" fill="#fff" stroke="#2a2a2a" stroke-width="1.1" stroke-linejoin="round"/><path d="M5.8 0.6 V3.8 H9 Z" fill="#2a2a2a" stroke="#2a2a2a" stroke-width="0.8" stroke-linejoin="round"/></svg>
<div class="a" style="left:220.9px;top:645.21px;font-size:10.2px;line-height:10.2px;color:#1a1a1a;font-weight:normal;font-style:normal;letter-spacing:-0.23px;-webkit-text-stroke:0.1px #1a1a1a">Invoice</div>
<div class="a" style="left:324.2px;top:645.21px;font-size:10.2px;line-height:10.2px;color:#3b8cc0;font-weight:normal;font-style:normal;letter-spacing:-0.23px;-webkit-text-stroke:0.1px #3b8cc0">AR015048</div>
<div class="a" style="left:422.9px;top:645.21px;font-size:10.2px;line-height:10.2px;color:#1a1a1a;font-weight:normal;font-style:normal;letter-spacing:-0.23px;-webkit-text-stroke:0.1px #1a1a1a">Closed</div>
<div class="a" style="left:548.6px;top:645.21px;font-size:10.2px;line-height:10.2px;color:#1a1a1a;font-weight:normal;font-style:normal;letter-spacing:-0.23px;-webkit-text-stroke:0.1px #1a1a1a">2/8/2026</div>
<div class="a" style="left:619px;top:645.21px;font-size:10.2px;line-height:10.2px;color:#1a1a1a;font-weight:normal;font-style:normal;letter-spacing:-0.23px;-webkit-text-stroke:0.1px #1a1a1a">02-2026</div>
<div class="a" style="left:689.4px;top:645.21px;font-size:10.2px;line-height:10.2px;color:#1a1a1a;font-weight:normal;font-style:normal;letter-spacing:-0.23px;-webkit-text-stroke:0.1px #1a1a1a">ABCSTUDIOS</div>
<div class="a" style="left:773.5px;top:645.21px;font-size:10.2px;line-height:10.2px;color:#1a1a1a;font-weight:normal;font-style:normal;letter-spacing:-0.23px;-webkit-text-stroke:0.1px #1a1a1a">ABC Studios Inc</div>
<div class="a" style="left:970.7px;top:645.17px;font-size:10px;line-height:10px;color:#222;font-weight:normal;font-style:normal;">X</div>
<div style="position:absolute;left:166.5px;top:665px;width:620px;height:7.2px;background:#d9d9d9;border-radius:3.6px"></div>
<div style="position:absolute;left:786px;top:672px;width:300px;height:1px;background:#f5f5f5;"></div>
<div class="a" style="left:173.4px;top:681.94px;font-size:9.76px;line-height:9.76px;color:#222;font-weight:normal;font-style:normal;">Records 1–19 of 9597</div>
<svg style="left:992px;top:680px;" width="9" height="9" viewBox="0 0 9 9"><path d="M0.8 0.5 V8 M7.8 0.5 L4 4.2 L7.8 8" fill="none" stroke="#c8c8c8" stroke-width="1.2"/></svg>
<svg style="left:1025.5px;top:680px;" width="6" height="9" viewBox="0 0 6 9"><path d="M4.8 0.5 L1 4.2 L4.8 8" fill="none" stroke="#c8c8c8" stroke-width="1.2"/></svg>
<div style="position:absolute;left:1043.5px;top:678px;width:1px;height:13px;background:#f0f0f0;"></div>
<div class="a" style="left:1068px;top:681.64px;font-size:9.76px;line-height:9.76px;color:#222;font-weight:normal;font-style:normal;">1</div>
<div class="a" style="left:1085.4px;top:681.44px;font-size:9.76px;line-height:9.76px;color:#222;font-weight:normal;font-style:normal;">of 506 pages</div>
<svg style="left:1155.5px;top:680.5px;" width="6" height="9" viewBox="0 0 6 9"><path d="M1 0.5 L4.6 4 L1 7.5" fill="none" stroke="#222" stroke-width="1.25"/></svg>
<svg style="left:1184.5px;top:680.5px;" width="10" height="9" viewBox="0 0 10 9"><path d="M1 0.5 L4.6 4 L1 7.5 M7.8 0.3 V7.8" fill="none" stroke="#222" stroke-width="1.25"/></svg>
<div style="position:absolute;left:0px;top:698px;width:1221px;height:21px;background:#0383d6;border-radius:0 0 5px 0"></div>
<div style="position:absolute;left:0px;top:719px;width:1222px;height:1px;background:#1d4f78;"></div>
<div style="position:absolute;left:1220px;top:120px;width:1px;height:578px;background:#dedede;"></div>
<svg style="left:12px;top:703px;" width="11" height="10" viewBox="0 0 11 10"><path d="M0.8 0.8 H10 V7 H5.5 L4 8.8 L3.3 7 H0.8 Z" fill="none" stroke="#dff4ff" stroke-width="1.2" stroke-linejoin="round"/><path d="M3 3 H7.5 M3 5 H6" stroke="#dff4ff" stroke-width="1"/></svg>
<div class="a" style="left:30.3px;top:703.67px;font-size:9.13px;line-height:9.13px;color:#fff;font-weight:bold;font-style:normal;">Your product is in trial mode. Only two concurrent users are allowed.</div>
<div class="a" style="left:1148.6px;top:704.34px;font-size:9.4px;line-height:9.4px;color:#fff;font-weight:bold;font-style:normal;letter-spacing:-0.12px">ACTIVATE</div>
<svg style="left:711px;top:193px;" width="10" height="15" viewBox="0 0 10 15"><path d="M0.7 0.7 L0.7 11.5 L3.2 9.2 L5 13.3 L6.8 12.5 L5 8.5 L8.5 8.3 Z" fill="#fff" stroke="#222" stroke-width="1" stroke-linejoin="round"/></svg>
<div style="position:absolute;left:1221px;top:0px;width:1px;height:120px;background:#5f7088;"></div>
<div style="position:absolute;left:1220px;top:120px;width:1px;height:578px;background:#e4e4e4;"></div>
<div style="position:absolute;left:1221px;top:120px;width:1px;height:600px;background:#bdbdbd;"></div>
</body></html>
